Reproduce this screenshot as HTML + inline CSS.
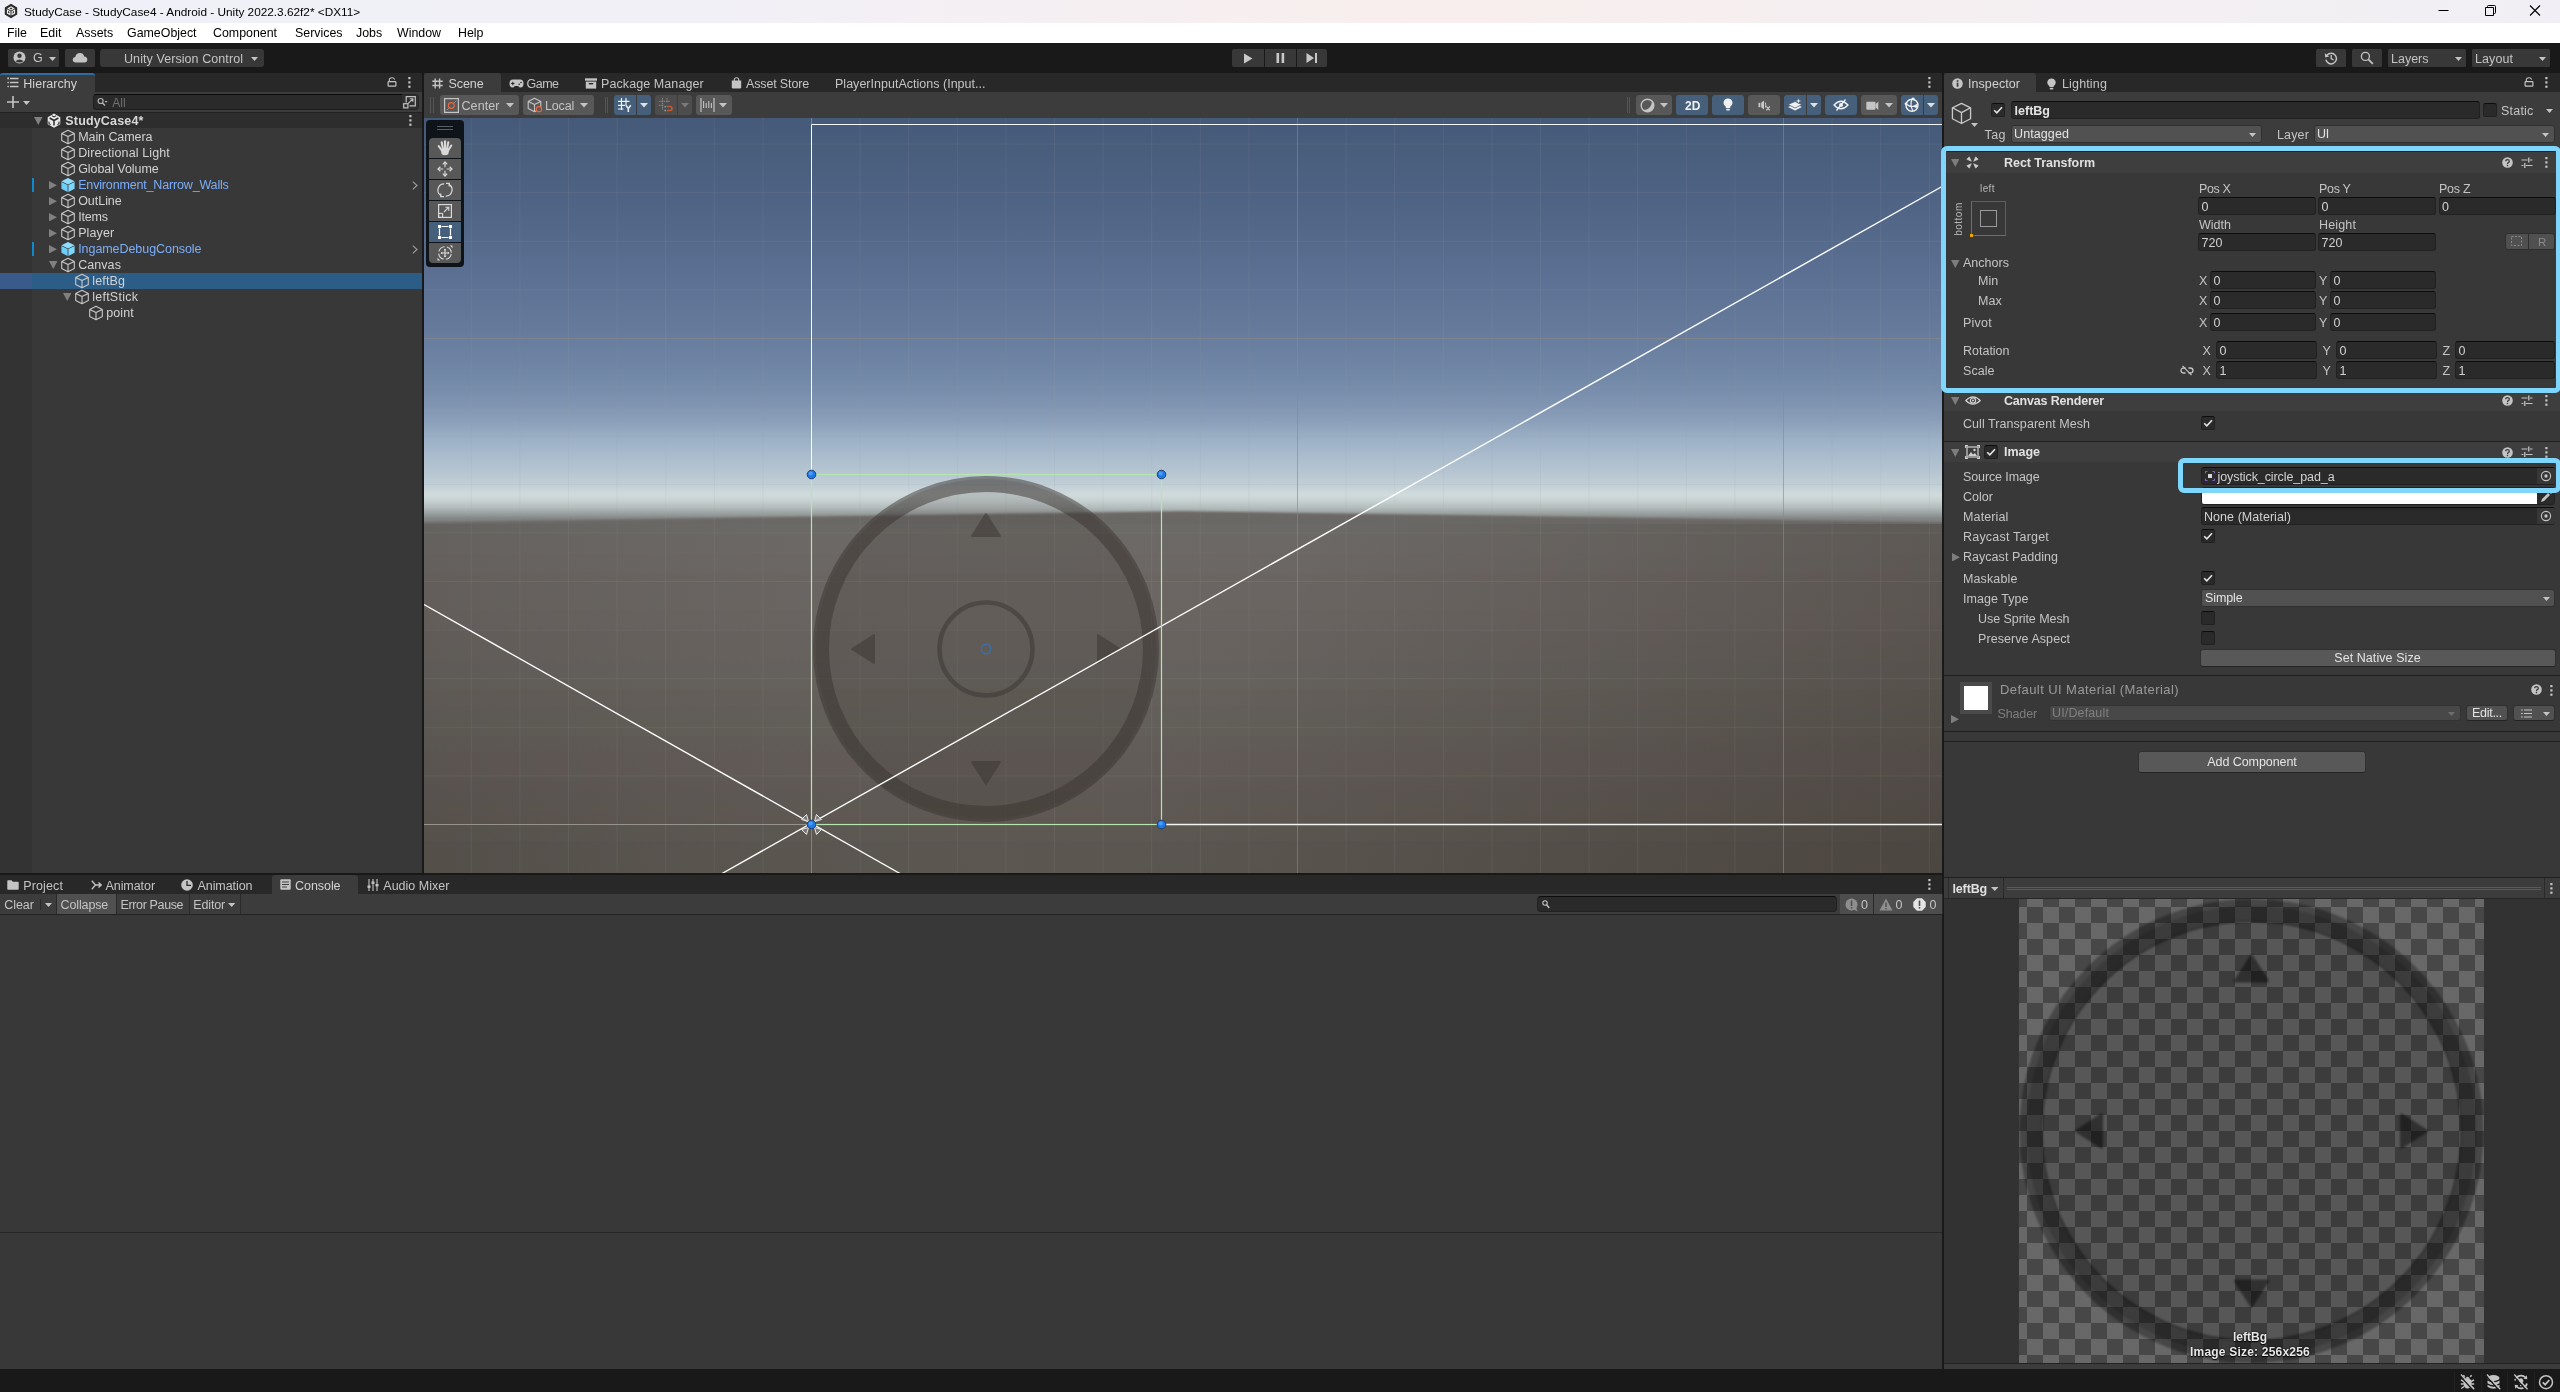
<!DOCTYPE html>
<html><head><meta charset="utf-8"><title>Unity</title>
<style>
*{box-sizing:border-box}
html,body{margin:0;padding:0}
body{width:2560px;height:1392px;position:relative;overflow:hidden;background:#383838;font-family:"Liberation Sans",sans-serif;font-size:12.5px;color:#c4c4c4}
.a{position:absolute}
.t{white-space:nowrap;line-height:16px;height:16px}
.f{background:#2a2a2a;border:1px solid #212121;border-top-color:#0d0d0d;border-radius:3px;color:#d2d2d2}
.dd{background:#515151;border:1px solid #303030;border-top-color:#303030;border-radius:3px}
.btn{background:#585858;border:1px solid #303030;border-bottom-color:#242424;border-radius:3px}
.cb{width:14px;height:14px;background:#2a2a2a;border:1px solid #212121;border-top-color:#0d0d0d;border-radius:2.500px}
.tb{background:#383838;border-radius:1.500px}
.sb{background:#585858;border-radius:3px}
.sbb{background:#46607c;border-radius:3px}
.hl{border:5px solid #7fd6fd;border-radius:6px}
</style>
</head><body>
<div id="root" style="position:absolute;left:0;top:0;width:2560px;height:1392px;will-change:transform">
<div class="a " style="left:0px;top:0px;width:2560px;height:23px;background:linear-gradient(90deg,#eff0f8 0%,#f2f0f6 30%,#f8eeed 55%,#f4eff2 80%,#f1eff5 100%);"></div>
<svg class="a" style="left:3px;top:3px;" width="16" height="16" viewBox="0 0 16 16"><path d="M8 0.8 14.2 4.4V11.6L8 15.2 1.8 11.6V4.4Z" fill="#2b2b2b"/><path d="M8 3.2 11.8 5.4 8 7.6 4.2 5.4Z M3.9 6.2 7.5 8.3V12.6L3.9 10.5Z M12.1 6.2 8.5 8.3V12.6L12.1 10.5Z" fill="#f0f0f0"/><path d="M8 4.6 9.5 5.5 8 6.4 6.5 5.5Z M5 8 6.4 8.8V10.5L5 9.7Z M11 8 9.6 8.8V10.5L11 9.7Z" fill="#2b2b2b"/></svg>
<div class="a t " style="top:3.5px;left:24px;color:#000;font-size:11.8px;">StudyCase - StudyCase4 - Android - Unity 2022.3.62f2* &lt;DX11&gt;</div>
<svg class="a" style="left:2438px;top:4px;" width="110" height="16" viewBox="0 0 110 16"><path d="M0.5 6.5H10.5" stroke="#000" stroke-width="1"/><path d="M47.5 3.5H55.5V11.5H47.5Z M49.5 3.5V2.5Q49.5 1.5 50.5 1.5H56.5Q57.5 1.5 57.5 2.5V8.5Q57.5 9.5 56.5 9.5H55.5" fill="none" stroke="#000" stroke-width="1"/><path d="M92 1.5 102 11.5M102 1.5 92 11.5" stroke="#000" stroke-width="1.1"/></svg>
<div class="a " style="left:0px;top:23px;width:2560px;height:20px;background:#ffffff;"></div>
<div class="a t m" style="top:24.5px;left:7px;color:#000;font-size:12.4px;">File</div>
<div class="a t m" style="top:24.5px;left:40px;color:#000;font-size:12.4px;">Edit</div>
<div class="a t m" style="top:24.5px;left:76px;color:#000;font-size:12.4px;">Assets</div>
<div class="a t m" style="top:24.5px;left:127px;color:#000;font-size:12.4px;">GameObject</div>
<div class="a t m" style="top:24.5px;left:213px;color:#000;font-size:12.4px;">Component</div>
<div class="a t m" style="top:24.5px;left:295px;color:#000;font-size:12.4px;">Services</div>
<div class="a t m" style="top:24.5px;left:356px;color:#000;font-size:12.4px;">Jobs</div>
<div class="a t m" style="top:24.5px;left:397px;color:#000;font-size:12.4px;">Window</div>
<div class="a t m" style="top:24.5px;left:458px;color:#000;font-size:12.4px;">Help</div>
<div class="a " style="left:0px;top:43px;width:2560px;height:30px;background:#191919;"></div>
<div class="a tb" style="left:8px;top:49px;width:51px;height:18px;"></div>
<svg class="a" style="left:13px;top:51px;" width="13" height="13" viewBox="0 0 13 13"><circle cx="6.5" cy="6.5" r="6" fill="#c4c4c4"/><circle cx="6.5" cy="4.8" r="2.2" fill="#383838"/><path d="M2.4 10.2Q6.5 6.6 10.6 10.2Q6.5 13 2.4 10.2Z" fill="#383838"/></svg>
<div class="a t " style="top:50px;left:33px;color:#c4c4c4;">G</div>
<svg class="a" style="left:49px;top:56.5px;" width="7" height="4" viewBox="0 0 7 4"><path d="M0 0H7L3.5 4Z" fill="#c4c4c4"/></svg>
<div class="a tb" style="left:65px;top:49px;width:30px;height:18px;"></div>
<svg class="a" style="left:72px;top:52px;" width="16" height="11" viewBox="0 0 16 11"><path d="M4 10.5Q0.7 10.5 0.7 7.6Q0.7 5.2 3.3 4.9Q4 1 8 1Q11.4 1 12.2 4.4Q15.3 4.6 15.3 7.6Q15.3 10.5 12.5 10.5Z" fill="#c4c4c4"/></svg>
<div class="a tb" style="left:100px;top:49px;width:164px;height:18px;border-radius:3px"></div>
<div class="a t " style="top:50.5px;left:124px;color:#c4c4c4;letter-spacing:0.076px;">Unity Version Control</div>
<svg class="a" style="left:251px;top:56.5px;" width="7" height="4" viewBox="0 0 7 4"><path d="M0 0H7L3.5 4Z" fill="#c4c4c4"/></svg>
<div class="a " style="left:1232px;top:49px;width:32px;height:18px;background:#383838;border-radius:2px 0 0 2px"></div>
<div class="a " style="left:1265px;top:49px;width:31px;height:18px;background:#383838;"></div>
<div class="a " style="left:1297px;top:49px;width:30px;height:18px;background:#383838;border-radius:0 2px 2px 0"></div>
<svg class="a" style="left:1243px;top:52.5px;" width="10" height="11" viewBox="0 0 10 11"><path d="M1 0.5 9.5 5.5 1 10.5Z" fill="#c8c8c8"/></svg>
<svg class="a" style="left:1276px;top:53px;" width="9" height="10" viewBox="0 0 9 10"><rect x="0.5" y="0" width="2.6" height="10" fill="#c8c8c8"/><rect x="5.6" y="0" width="2.6" height="10" fill="#c8c8c8"/></svg>
<svg class="a" style="left:1306px;top:53px;" width="12" height="10" viewBox="0 0 12 10"><path d="M0.5 0 8 5 0.5 10Z" fill="#c8c8c8"/><rect x="9" y="0" width="2" height="10" fill="#c8c8c8"/></svg>
<div class="a tb" style="left:2316px;top:49px;width:30px;height:18px;"></div>
<svg class="a" style="left:2324px;top:51px;" width="14" height="14" viewBox="0 0 14 14"><path d="M3 4.2A5.3 5.3 0 1 1 1.9 8.6" fill="none" stroke="#c4c4c4" stroke-width="1.5"/><path d="M0.8 2.2 1.2 6.4 5.2 5.4Z" fill="#c4c4c4"/><path d="M7.2 4V7.6L9.6 9" fill="none" stroke="#c4c4c4" stroke-width="1.3"/></svg>
<div class="a tb" style="left:2352px;top:49px;width:30px;height:18px;"></div>
<svg class="a" style="left:2360px;top:51px;" width="14" height="14" viewBox="0 0 14 14"><circle cx="5.4" cy="5.4" r="4" fill="none" stroke="#c4c4c4" stroke-width="1.3"/><path d="M8.4 8.4 12.8 12.8" stroke="#c4c4c4" stroke-width="1.8"/></svg>
<div class="a tb" style="left:2388px;top:49px;width:78px;height:18px;"></div>
<div class="a t " style="top:50.5px;left:2391px;color:#c4c4c4;letter-spacing:-0.003px;">Layers</div>
<svg class="a" style="left:2455px;top:56.5px;" width="7" height="4" viewBox="0 0 7 4"><path d="M0 0H7L3.5 4Z" fill="#c4c4c4"/></svg>
<div class="a tb" style="left:2472px;top:49px;width:78px;height:18px;"></div>
<div class="a t " style="top:50.5px;left:2475px;color:#c4c4c4;letter-spacing:0.079px;">Layout</div>
<svg class="a" style="left:2539px;top:56.5px;" width="7" height="4" viewBox="0 0 7 4"><path d="M0 0H7L3.5 4Z" fill="#c4c4c4"/></svg>
<div class="a " style="left:0px;top:73px;width:2560px;height:1296px;background:#191919;"></div>
<div class="a " style="left:0px;top:73px;width:422px;height:800px;background:#383838;"></div>
<div class="a " style="left:0px;top:73px;width:422px;height:19px;background:#282828;"></div>
<div class="a " style="left:0px;top:73px;width:95px;height:19px;background:#3c3c3c;border-top:2px solid #2f6ca6;border-radius:3px 3px 0 0"></div>
<svg class="a" style="left:7px;top:77px;" width="12" height="11" viewBox="0 0 12 11"><path d="M3 1.5H11.5M3 5.5H11.5M3 9.5H11.5" stroke="#c4c4c4" stroke-width="1.3"/><path d="M0.3 0.6H2V2.3H0.3Z" fill="#c4c4c4"/><path d="M1.2 4.7V6.3M0.4 5.5H2M1.2 8.7V10.3M.4 9.5H2" stroke="#c4c4c4" stroke-width=".8"/></svg>
<div class="a t " style="top:75.5px;left:23.3px;color:#d2d2d2;letter-spacing:0.03px;">Hierarchy</div>
<svg class="a" style="left:387px;top:77px;" width="10" height="10" viewBox="0 0 10 10"><path d="M2.3 4.6V3Q2.3 0.8 5 0.8Q7.2 0.8 7.6 2.6" fill="none" stroke="#c4c4c4" stroke-width="1.1"/><rect x="1.1" y="4.6" width="7.8" height="4.6" rx="0.8" fill="none" stroke="#c4c4c4" stroke-width="1.2"/></svg>
<svg class="a" style="left:407.8px;top:77px;" width="3" height="11" viewBox="0 0 3 11"><rect x="0.3" y="0" width="2.2" height="2.2" fill="#c4c4c4"/><rect x="0.3" y="4.3" width="2.2" height="2.2" fill="#c4c4c4"/><rect x="0.3" y="8.6" width="2.2" height="2.2" fill="#c4c4c4"/></svg>
<div class="a " style="left:0px;top:92px;width:422px;height:21px;background:#3c3c3c;border-bottom:1px solid #232323"></div>
<svg class="a" style="left:7px;top:96px;" width="12" height="12" viewBox="0 0 12 12"><path d="M6 0V12M0 6H12" stroke="#c4c4c4" stroke-width="1.6"/></svg>
<svg class="a" style="left:23.3px;top:100.5px;" width="7" height="4" viewBox="0 0 7 4"><path d="M0 0H7L3.5 4Z" fill="#c4c4c4"/></svg>
<div class="a f" style="left:93px;top:94px;width:308.5px;height:16px;border-radius:3.500px 0 0 3.500px;border-color:#1f1f1f;border-top-color:#0a0a0a;border-right:none"></div>
<div class="a " style="left:401.5px;top:94px;width:17px;height:16px;background:#303030;border-radius:0 4px 4px 0;border:1px solid #262626;border-left:none"></div>
<svg class="a" style="left:97px;top:97px;" width="12" height="11" viewBox="0 0 12 11"><circle cx="3.6" cy="4" r="2.5" fill="none" stroke="#b4b4b4" stroke-width="1.2"/><path d="M5.3 5.8 8 8.6" stroke="#b4b4b4" stroke-width="1.4"/><path d="M7.5 4H10.7L9.1 5.8Z" fill="#b4b4b4"/></svg>
<div class="a t " style="top:94.5px;left:112.3px;color:#707070;font-size:12px;">All</div>
<svg class="a" style="left:402.7px;top:95.5px;" width="14" height="13" viewBox="0 0 14 13"><path d="M3.200 6.500V0.700H12.300V9.800H6.500" fill="none" stroke="#c0c0c0" stroke-width="1.200"/><rect x="0.700" y="7.700" width="4.200" height="4.200" fill="none" stroke="#c0c0c0" stroke-width="1.200"/><path d="M5 7.600 9.800 2.800M6.800 2.700H9.900V5.800" fill="none" stroke="#c0c0c0" stroke-width="1.100"/></svg>
<div class="a " style="left:0px;top:113px;width:32px;height:760px;background:#333333;"></div>
<div class="a " style="left:0px;top:113px;width:422px;height:15px;background:#2d2d2d;"></div>
<svg class="a" style="left:34.3px;top:116.5px;" width="8.5" height="8" viewBox="0 0 8.5 8"><path d="M0 0H8.5L4.25 8Z" fill="#808080"/></svg>
<svg class="a" style="left:47px;top:113px;" width="14" height="15" viewBox="0 0 14 15"><path d="M7 0.6 13.3 4.2V11.2L7 14.8 0.7 11.2V4.2Z" fill="#e8e8e8"/><path d="M7 3.6 8.2 4.3V6.2L10.6 7.6 11.8 6.9V4.9L7 2.1 2.2 4.9V6.9L3.4 7.6 5.8 6.2V4.3Z" fill="#2d2d2d" opacity="0"/><path d="M7 7.5 2.6 5 M7 7.5 11.4 5M7 7.5V12.6" stroke="#2d2d2d" stroke-width="1.5" fill="none"/><path d="M4.8 2.6 7 3.9 9.2 2.6M2 8.6V10.6L3.6 11.6M12 8.6V10.6L10.4 11.6" stroke="#2d2d2d" stroke-width="1.1" fill="none"/></svg>
<div class="a t " style="top:112.5px;left:65.3px;color:#d8d8d8;font-weight:bold;letter-spacing:0.167px;">StudyCase4*</div>
<svg class="a" style="left:408.5px;top:115px;" width="3" height="11" viewBox="0 0 3 11"><rect x="0.3" y="0" width="2.2" height="2.2" fill="#c4c4c4"/><rect x="0.3" y="4.3" width="2.2" height="2.2" fill="#c4c4c4"/><rect x="0.3" y="8.6" width="2.2" height="2.2" fill="#c4c4c4"/></svg>
<svg class="a" style="left:60px;top:129px;" width="16" height="16" viewBox="0 0 16 16"><path d="M8 1.3 14.3 4.4V11.6L8 14.7 1.7 11.6V4.4Z M1.7 4.4 8 7.6 14.3 4.4 M8 7.6V14.7" fill="none" stroke="#c8c8c8" stroke-width="1.1" stroke-linejoin="round"/></svg>
<div class="a t " style="top:129px;left:78.2px;color:#d2d2d2;letter-spacing:-0.07px;">Main Camera</div>
<svg class="a" style="left:60px;top:145px;" width="16" height="16" viewBox="0 0 16 16"><path d="M8 1.3 14.3 4.4V11.6L8 14.7 1.7 11.6V4.4Z M1.7 4.4 8 7.6 14.3 4.4 M8 7.6V14.7" fill="none" stroke="#c8c8c8" stroke-width="1.1" stroke-linejoin="round"/></svg>
<div class="a t " style="top:145px;left:78.2px;color:#d2d2d2;letter-spacing:0.125px;">Directional Light</div>
<svg class="a" style="left:60px;top:161px;" width="16" height="16" viewBox="0 0 16 16"><path d="M8 1.3 14.3 4.4V11.6L8 14.7 1.7 11.6V4.4Z M1.7 4.4 8 7.6 14.3 4.4 M8 7.6V14.7" fill="none" stroke="#c8c8c8" stroke-width="1.1" stroke-linejoin="round"/></svg>
<div class="a t " style="top:161px;left:78.2px;color:#d2d2d2;letter-spacing:-0.061px;">Global Volume</div>
<div class="a " style="left:32px;top:178px;width:2.3px;height:14px;background:#0f88d0;"></div>
<svg class="a" style="left:60px;top:177px;" width="16" height="16" viewBox="0 0 16 16"><path d="M8 1 14.6 4.3 8 7.6 1.4 4.3Z" fill="#8fdcff"/><path d="M1.4 4.9 7.6 8V15L1.4 11.8Z" fill="#6fcdf7"/><path d="M14.6 4.9 8.4 8V15l6.2-3.2Z" fill="#7fd6fd"/></svg>
<svg class="a" style="left:412px;top:180.5px;" width="6" height="9" viewBox="0 0 6 9"><path d="M0.8 0.6 5 4.5 0.8 8.4" fill="none" stroke="#9a9a9a" stroke-width="1.2"/></svg>
<svg class="a" style="left:49px;top:180.5px;" width="8" height="8.5" viewBox="0 0 8 8.5"><path d="M0 0V8.5L8 4.25Z" fill="#808080"/></svg>
<div class="a t " style="top:177px;left:78.2px;color:#7baefa;letter-spacing:-0.164px;">Environment_Narrow_Walls</div>
<svg class="a" style="left:60px;top:193px;" width="16" height="16" viewBox="0 0 16 16"><path d="M8 1.3 14.3 4.4V11.6L8 14.7 1.7 11.6V4.4Z M1.7 4.4 8 7.6 14.3 4.4 M8 7.6V14.7" fill="none" stroke="#c8c8c8" stroke-width="1.1" stroke-linejoin="round"/></svg>
<svg class="a" style="left:49px;top:196.5px;" width="8" height="8.5" viewBox="0 0 8 8.5"><path d="M0 0V8.5L8 4.25Z" fill="#808080"/></svg>
<div class="a t " style="top:193px;left:78.2px;color:#d2d2d2;letter-spacing:-0.04px;">OutLine</div>
<svg class="a" style="left:60px;top:209px;" width="16" height="16" viewBox="0 0 16 16"><path d="M8 1.3 14.3 4.4V11.6L8 14.7 1.7 11.6V4.4Z M1.7 4.4 8 7.6 14.3 4.4 M8 7.6V14.7" fill="none" stroke="#c8c8c8" stroke-width="1.1" stroke-linejoin="round"/></svg>
<svg class="a" style="left:49px;top:212.5px;" width="8" height="8.5" viewBox="0 0 8 8.5"><path d="M0 0V8.5L8 4.25Z" fill="#808080"/></svg>
<div class="a t " style="top:209px;left:78.2px;color:#d2d2d2;letter-spacing:-0.162px;">Items</div>
<svg class="a" style="left:60px;top:225px;" width="16" height="16" viewBox="0 0 16 16"><path d="M8 1.3 14.3 4.4V11.6L8 14.7 1.7 11.6V4.4Z M1.7 4.4 8 7.6 14.3 4.4 M8 7.6V14.7" fill="none" stroke="#c8c8c8" stroke-width="1.1" stroke-linejoin="round"/></svg>
<svg class="a" style="left:49px;top:228.5px;" width="8" height="8.5" viewBox="0 0 8 8.5"><path d="M0 0V8.5L8 4.25Z" fill="#808080"/></svg>
<div class="a t " style="top:225px;left:78.2px;color:#d2d2d2;letter-spacing:0.095px;">Player</div>
<div class="a " style="left:32px;top:242px;width:2.3px;height:14px;background:#0f88d0;"></div>
<svg class="a" style="left:60px;top:241px;" width="16" height="16" viewBox="0 0 16 16"><path d="M8 1 14.6 4.3 8 7.6 1.4 4.3Z" fill="#8fdcff"/><path d="M1.4 4.9 7.6 8V15L1.4 11.8Z" fill="#6fcdf7"/><path d="M14.6 4.9 8.4 8V15l6.2-3.2Z" fill="#7fd6fd"/></svg>
<svg class="a" style="left:412px;top:244.5px;" width="6" height="9" viewBox="0 0 6 9"><path d="M0.8 0.6 5 4.5 0.8 8.4" fill="none" stroke="#9a9a9a" stroke-width="1.2"/></svg>
<svg class="a" style="left:49px;top:244.5px;" width="8" height="8.5" viewBox="0 0 8 8.5"><path d="M0 0V8.5L8 4.25Z" fill="#808080"/></svg>
<div class="a t " style="top:241px;left:78.2px;color:#7baefa;letter-spacing:-0.063px;">IngameDebugConsole</div>
<svg class="a" style="left:60px;top:257px;" width="16" height="16" viewBox="0 0 16 16"><path d="M8 1.3 14.3 4.4V11.6L8 14.7 1.7 11.6V4.4Z M1.7 4.4 8 7.6 14.3 4.4 M8 7.6V14.7" fill="none" stroke="#c8c8c8" stroke-width="1.1" stroke-linejoin="round"/></svg>
<svg class="a" style="left:48.5px;top:261px;" width="8.5" height="8" viewBox="0 0 8.5 8"><path d="M0 0H8.5L4.25 8Z" fill="#808080"/></svg>
<div class="a t " style="top:257px;left:78.2px;color:#d2d2d2;letter-spacing:0.062px;">Canvas</div>
<div class="a " style="left:0px;top:273px;width:422px;height:16px;background:#2c5d87;"></div>
<div class="a " style="left:0px;top:273px;width:32px;height:16px;background:#3a5a8c;"></div>
<svg class="a" style="left:74px;top:273px;" width="16" height="16" viewBox="0 0 16 16"><path d="M8 1.3 14.3 4.4V11.6L8 14.7 1.7 11.6V4.4Z M1.7 4.4 8 7.6 14.3 4.4 M8 7.6V14.7" fill="none" stroke="#c8c8c8" stroke-width="1.1" stroke-linejoin="round"/></svg>
<div class="a t " style="top:273px;left:92.2px;color:#d2d2d2;letter-spacing:0.173px;">leftBg</div>
<svg class="a" style="left:74px;top:289px;" width="16" height="16" viewBox="0 0 16 16"><path d="M8 1.3 14.3 4.4V11.6L8 14.7 1.7 11.6V4.4Z M1.7 4.4 8 7.6 14.3 4.4 M8 7.6V14.7" fill="none" stroke="#c8c8c8" stroke-width="1.1" stroke-linejoin="round"/></svg>
<svg class="a" style="left:62.5px;top:293px;" width="8.5" height="8" viewBox="0 0 8.5 8"><path d="M0 0H8.5L4.25 8Z" fill="#808080"/></svg>
<div class="a t " style="top:289px;left:92.2px;color:#d2d2d2;letter-spacing:0.249px;">leftStick</div>
<svg class="a" style="left:88px;top:305px;" width="16" height="16" viewBox="0 0 16 16"><path d="M8 1.3 14.3 4.4V11.6L8 14.7 1.7 11.6V4.4Z M1.7 4.4 8 7.6 14.3 4.4 M8 7.6V14.7" fill="none" stroke="#c8c8c8" stroke-width="1.1" stroke-linejoin="round"/></svg>
<div class="a t " style="top:305px;left:106.2px;color:#d2d2d2;letter-spacing:0.129px;">point</div>
<div class="a " style="left:424px;top:73px;width:1518px;height:800px;background:#383838;"></div>
<div class="a " style="left:424px;top:73px;width:1518px;height:19px;background:#282828;"></div>
<div class="a " style="left:424px;top:73px;width:77px;height:19px;background:#3c3c3c;border-radius:3px 3px 0 0"></div>
<svg class="a" style="left:432px;top:78px;" width="11" height="11" viewBox="0 0 11 11"><path d="M3.2 0.5V10.5M7.6 0.5V10.5M0.3 3.3H10.7M0.3 7.5H10.7" stroke="#c4c4c4" stroke-width="1.4"/></svg>
<div class="a t " style="top:75.5px;left:448.5px;color:#d2d2d2;letter-spacing:-0.088px;">Scene</div>
<svg class="a" style="left:508.5px;top:79px;" width="15" height="9" viewBox="0 0 15 9"><path d="M4 0.5H11Q14.5 0.5 14.5 4.5Q14.5 8.5 11.5 8.5Q10 8.5 9.3 7H5.7Q5 8.5 3.5 8.5Q0.5 8.500.5 4.5Q0.5 0.5 4 0.5Z" fill="#c4c4c4"/><path d="M3.8 2.8V6.2M2.1 4.500H5.5" stroke="#282828" stroke-width="1.1"/><circle cx="10.2" cy="5.300" r=".8" fill="#282828"/><circle cx="12" cy="3.500" r=".8" fill="#282828"/></svg>
<div class="a t " style="top:75.5px;left:526.5px;color:#c4c4c4;letter-spacing:-0.509px;">Game</div>
<svg class="a" style="left:585px;top:78px;" width="12" height="11" viewBox="0 0 12 11"><rect x="0" y="0.300" width="12" height="2.400" fill="#c4c4c4"/><path d="M0.800 3.600H11.200V10.600H0.800Z" fill="#c4c4c4"/><rect x="3.800" y="5" width="4.400" height="1.400" fill="#282828"/></svg>
<div class="a t " style="top:75.5px;left:601px;color:#c4c4c4;letter-spacing:0.087px;">Package Manager</div>
<svg class="a" style="left:730.5px;top:77px;" width="11" height="12" viewBox="0 0 11 12"><path d="M3.300 4V2.800Q3.300 0.800 5.500 0.800Q7.700 0.800 7.700 2.800V4" fill="none" stroke="#c4c4c4" stroke-width="1.1"/><path d="M0.800 3.500H10.200V10.300Q10.200 11.500 9 11.500H2Q0.800 11.500 0.800 10.300Z" fill="#c4c4c4"/></svg>
<div class="a t " style="top:75.5px;left:746px;color:#c4c4c4;letter-spacing:-0.146px;">Asset Store</div>
<div class="a t " style="top:75.5px;left:835px;color:#c4c4c4;letter-spacing:0.015px;">PlayerInputActions (Input...</div>
<svg class="a" style="left:1927.5px;top:77px;" width="3" height="11" viewBox="0 0 3 11"><rect x="0.3" y="0" width="2.2" height="2.2" fill="#c4c4c4"/><rect x="0.3" y="4.3" width="2.2" height="2.2" fill="#c4c4c4"/><rect x="0.3" y="8.6" width="2.2" height="2.2" fill="#c4c4c4"/></svg>
<div class="a " style="left:424px;top:92px;width:1518px;height:26px;background:#3c3c3c;"></div>
<div class="a " style="left:430px;top:97px;width:1px;height:16px;background:#555;"></div><div class="a " style="left:432.8px;top:97px;width:1px;height:16px;background:#555;"></div>
<div class="a " style="left:604.5px;top:97px;width:1px;height:16px;background:#555;"></div><div class="a " style="left:607.3px;top:97px;width:1px;height:16px;background:#555;"></div>
<div class="a " style="left:1626.5px;top:97px;width:1px;height:16px;background:#555;"></div><div class="a " style="left:1629.3px;top:97px;width:1px;height:16px;background:#555;"></div>
<div class="a sb" style="left:440px;top:95px;width:79px;height:20px;"></div>
<svg class="a" style="left:443.5px;top:97.5px;" width="15" height="15" viewBox="0 0 15 15"><rect x="0.600" y="0.600" width="13.800" height="13.800" fill="none" stroke="#c4c4c4" stroke-width="1.2"/><path d="M2.500 12.500 12.500 2.500" stroke="#c4c4c4" stroke-width=".8" opacity=".6"/><circle cx="7.300" cy="7.500" r="2.900" fill="#595959" stroke="#f0643c" stroke-width="1.100"/></svg>
<div class="a t " style="top:97.5px;left:461.5px;color:#c4c4c4;letter-spacing:0.081px;">Center</div>
<svg class="a" style="left:505.5px;top:103px;" width="8" height="4.5" viewBox="0 0 8 4.5"><path d="M0 0H8L4.0 4.5Z" fill="#c4c4c4"/></svg>
<div class="a sb" style="left:523px;top:95px;width:71px;height:20px;"></div>
<svg class="a" style="left:526.5px;top:97px;" width="16" height="16" viewBox="0 0 16 16"><path d="M7.500 1.300 13.800 4.400V11.600L7.500 14.700 1.200 11.600V4.400Z M1.200 4.400 7.500 7.600 13.800 4.400 M7.500 7.600V14.700" fill="none" stroke="#c4c4c4" stroke-width="1.100" stroke-linejoin="round"/><circle cx="12" cy="12.200" r="2.600" fill="#595959" stroke="#f0643c" stroke-width="1.100"/></svg>
<div class="a t " style="top:97.5px;left:545px;color:#c4c4c4;letter-spacing:-0.176px;">Local</div>
<svg class="a" style="left:580px;top:103px;" width="8" height="4.5" viewBox="0 0 8 4.5"><path d="M0 0H8L4.0 4.5Z" fill="#c4c4c4"/></svg>
<div class="a " style="left:614px;top:95px;width:22px;height:20px;background:#46607c;border-radius:3px 0 0 3px"></div>
<div class="a " style="left:637px;top:95px;width:14px;height:20px;background:#46607c;border-radius:0 3px 3px 0"></div>
<svg class="a" style="left:617px;top:97px;" width="17" height="16" viewBox="0 0 17 16"><path d="M4.500 1V13M9 1V8M1 4.300H12.500M1 8.300H8M1 12H6.500" stroke="#f0f0f0" stroke-width="1.200" fill="none"/><path d="M8.800 8.300 11.300 11.500 13.800 8.300M11.300 11.500V15" stroke="#f0f0f0" stroke-width="1.500" fill="none"/></svg>
<svg class="a" style="left:640px;top:103px;" width="8" height="4.5" viewBox="0 0 8 4.5"><path d="M0 0H8L4.0 4.5Z" fill="#e0e0e0"/></svg>
<div class="a " style="left:655px;top:95px;width:22px;height:20px;background:#4d4d4d;border-radius:3px 0 0 3px"></div>
<div class="a " style="left:678px;top:95px;width:14px;height:20px;background:#4d4d4d;border-radius:0 3px 3px 0"></div>
<svg class="a" style="left:658px;top:97px;" width="17" height="16" viewBox="0 0 17 16"><path d="M4.500 1V13M9 1V6M1 4.300H12.500M1 8.300H6" stroke="#8a8a8a" stroke-width="1" fill="none" stroke-dasharray="1.500 .8"/><path d="M9 9.500H12Q14 9.500 14 11.500Q14 13.500 12 13.500H9" stroke="#c8562e" stroke-width="1.600" fill="none"/><rect x="6.500" y="8.800" width="1.600" height="1.600" fill="#9a9a9a"/><rect x="6.500" y="12.700" width="1.600" height="1.600" fill="#9a9a9a"/></svg>
<svg class="a" style="left:681px;top:103px;" width="8" height="4.5" viewBox="0 0 8 4.5"><path d="M0 0H8L4.0 4.5Z" fill="#7a7a7a"/></svg>
<div class="a sb" style="left:696px;top:95px;width:36px;height:20px;"></div>
<svg class="a" style="left:700px;top:98px;" width="15" height="14" viewBox="0 0 15 14"><path d="M1 0V14M14 0V14" stroke="#c4c4c4" stroke-width="1.200"/><path d="M3.600 3V10M6.200 5V10M8.800 3V10M11.400 5V10" stroke="#c4c4c4" stroke-width="1.100"/></svg>
<svg class="a" style="left:719px;top:103px;" width="8" height="4.5" viewBox="0 0 8 4.5"><path d="M0 0H8L4.0 4.5Z" fill="#c4c4c4"/></svg>
<div class="a sb" style="left:1636px;top:95px;width:36px;height:20px;"></div>
<svg class="a" style="left:1639.5px;top:97.5px;" width="15" height="15" viewBox="0 0 15 15"><circle cx="7.500" cy="7.500" r="6.300" fill="none" stroke="#c4c4c4" stroke-width="1.400"/><path d="M11.550 2.670A6.300 6.300 0 1 1 2.670 11.550A7.500 7.500 0 0 0 11.550 2.670Z" fill="#c4c4c4"/></svg>
<svg class="a" style="left:1660px;top:103px;" width="8" height="4.5" viewBox="0 0 8 4.5"><path d="M0 0H8L4.0 4.5Z" fill="#c4c4c4"/></svg>
<div class="a sbb" style="left:1676px;top:95px;width:32px;height:20px;"></div>
<div class="a t " style="top:97.5px;left:1685px;color:#f0f0f0;font-weight:bold;font-size:12px;">2D</div>
<div class="a sbb" style="left:1712px;top:95px;width:32px;height:20px;"></div>
<svg class="a" style="left:1722px;top:98px;" width="12" height="14" viewBox="0 0 12 14"><path d="M6 0.500A4.300 4.300 0 0 1 8.300 8.500V10H3.700V8.500A4.300 4.300 0 0 1 6 0.500Z" fill="#f0f0f0"/><rect x="4.200" y="10.800" width="3.600" height="1.800" rx=".8" fill="#f0f0f0"/></svg>
<div class="a sb" style="left:1748px;top:95px;width:32px;height:20px;"></div>
<svg class="a" style="left:1758px;top:100px;" width="13" height="11" viewBox="0 0 13 11"><path d="M0.500 2.800H2.300V7.200H0.500Z" fill="#c8c8c8"/><path d="M3.200 2.800 6 0.500V9.500L3.200 7.200Z" fill="#c8c8c8"/><path d="M7.300 2.500Q8.300 5 7.300 7.500" stroke="#c8c8c8" stroke-width="1" fill="none"/><path d="M8.300 6.300 11.800 10.300M11.800 6.300 8.300 10.300" stroke="#c8c8c8" stroke-width="1.200"/></svg>
<div class="a " style="left:1784px;top:95px;width:22px;height:20px;background:#46607c;border-radius:3px 0 0 3px"></div>
<div class="a " style="left:1807px;top:95px;width:14px;height:20px;background:#46607c;border-radius:0 3px 3px 0"></div>
<svg class="a" style="left:1787px;top:98px;" width="16" height="14" viewBox="0 0 16 14"><path d="M1 9 8 6 15 9 8 12.500Z" fill="#f0f0f0"/><path d="M1 6.500 8 3.500 15 6.500 8 10Z" fill="#f0f0f0" stroke="#46607c" stroke-width=".8"/><path d="M11.500 0 12.300 2.200 14.500 3 12.300 3.800 11.500 6 10.700 3.800 8.500 3 10.700 2.200Z" fill="#f0f0f0" stroke="#46607c" stroke-width=".5"/></svg>
<svg class="a" style="left:1810px;top:103px;" width="8" height="4.5" viewBox="0 0 8 4.5"><path d="M0 0H8L4.0 4.5Z" fill="#e0e0e0"/></svg>
<div class="a sbb" style="left:1825px;top:95px;width:32px;height:20px;"></div>
<svg class="a" style="left:1833px;top:99px;" width="16" height="12" viewBox="0 0 16 12"><path d="M1 6Q8 -1.500 15 6Q8 13.500 1 6Z" fill="none" stroke="#f0f0f0" stroke-width="1.300"/><circle cx="8" cy="6" r="2" fill="#f0f0f0"/><path d="M12.500 0.500 3.500 11.500" stroke="#f0f0f0" stroke-width="1.300"/></svg>
<div class="a sb" style="left:1861px;top:95px;width:36px;height:20px;"></div>
<svg class="a" style="left:1865.5px;top:100.5px;" width="14" height="10" viewBox="0 0 14 10"><rect x="0.300" y="0.800" width="9.200" height="8" rx="1" fill="#c4c4c4"/><path d="M9.500 3.300 12.300 0.500V9.100L9.500 6.300Z" fill="#c4c4c4"/></svg>
<svg class="a" style="left:1885px;top:103px;" width="8" height="4.5" viewBox="0 0 8 4.5"><path d="M0 0H8L4.0 4.5Z" fill="#c4c4c4"/></svg>
<div class="a " style="left:1901px;top:95px;width:22px;height:20px;background:#46607c;border-radius:3px 0 0 3px"></div>
<div class="a " style="left:1924px;top:95px;width:14px;height:20px;background:#46607c;border-radius:0 3px 3px 0"></div>
<svg class="a" style="left:1904px;top:97px;" width="16" height="16" viewBox="0 0 16 16"><circle cx="8" cy="8.300" r="6" fill="none" stroke="#f0f0f0" stroke-width="1.400"/><path d="M2.200 7Q8 12 13.800 7M8 2.300Q5.500 8 9 14" fill="none" stroke="#f0f0f0" stroke-width="1.200"/><circle cx="9.200" cy="1.800" r="1.400" fill="#f0f0f0"/><circle cx="2" cy="6.800" r="1.400" fill="#f0f0f0"/><circle cx="11.800" cy="9.300" r="1.500" fill="#f0f0f0"/></svg>
<svg class="a" style="left:1927px;top:103px;" width="8" height="4.5" viewBox="0 0 8 4.5"><path d="M0 0H8L4.0 4.5Z" fill="#e0e0e0"/></svg>
<svg class="a" style="left:424px;top:118px;" width="1518" height="755" viewBox="0 0 1518 755"><defs><linearGradient id="sky" x1="0" y1="0" x2="0" y2="1"><stop offset="0.0000" stop-color="#455978"/><stop offset="0.1086" stop-color="#4f6384"/><stop offset="0.2013" stop-color="#5a6f91"/><stop offset="0.2808" stop-color="#667b9c"/><stop offset="0.3470" stop-color="#7389a8"/><stop offset="0.3735" stop-color="#7d92af"/><stop offset="0.4000" stop-color="#8a9eb9"/><stop offset="0.4265" stop-color="#9db1c6"/><stop offset="0.4464" stop-color="#a9bbcd"/><stop offset="0.4662" stop-color="#b4c4d0"/><stop offset="0.4848" stop-color="#c0ced6"/><stop offset="0.4993" stop-color="#d0dbdb"/><stop offset="0.5073" stop-color="#c6d0d0"/><stop offset="0.5166" stop-color="#b1bbba"/><stop offset="0.5245" stop-color="#979d9d"/><stop offset="0.5298" stop-color="#858888"/><stop offset="0.5377" stop-color="#787a7a"/></linearGradient><linearGradient id="gnd" x1="0" y1="0" x2="0" y2="1"><stop offset="0" stop-color="#6c6866"/><stop offset="0.35" stop-color="#66615d"/><stop offset="1" stop-color="#57514c"/></linearGradient><linearGradient id="gndx" x1="0" y1="0" x2="1" y2="0"><stop offset="0" stop-color="#000" stop-opacity=".05"/><stop offset="0.4" stop-color="#fff" stop-opacity=".02"/><stop offset="1" stop-color="#000" stop-opacity=".03"/></linearGradient><linearGradient id="gndd" gradientUnits="userSpaceOnUse" x1="900" y1="394" x2="1518" y2="755"><stop offset="0" stop-color="#1a0f05" stop-opacity="0"/><stop offset="1" stop-color="#1a0f05" stop-opacity=".16"/></linearGradient><filter id="hb" x="-5%" y="-5%" width="110%" height="110%"><feGaussianBlur stdDeviation="0.9"/></filter><filter id="jb"><feGaussianBlur stdDeviation="0.7"/></filter></defs><rect x="0" y="0" width="1518" height="755" fill="url(#sky)"/><path d="M-10.0 404.6L759.0 393.2L1528.0 404.6V765H-10Z" fill="url(#gnd)" filter="url(#hb)"/><rect x="0" y="406" width="1518" height="349" fill="url(#gndx)"/><rect x="0" y="406" width="1518" height="349" fill="url(#gndd)"/><path d="M47.3 0V755" stroke="#a0a0a0" stroke-opacity="0.13" stroke-width="1"/><path d="M95.9 0V755" stroke="#a0a0a0" stroke-opacity="0.13" stroke-width="1"/><path d="M144.5 0V755" stroke="#a0a0a0" stroke-opacity="0.13" stroke-width="1"/><path d="M193.1 0V755" stroke="#a0a0a0" stroke-opacity="0.13" stroke-width="1"/><path d="M241.7 0V755" stroke="#a0a0a0" stroke-opacity="0.13" stroke-width="1"/><path d="M290.3 0V755" stroke="#a0a0a0" stroke-opacity="0.13" stroke-width="1"/><path d="M338.9 0V755" stroke="#a0a0a0" stroke-opacity="0.13" stroke-width="1"/><path d="M436.1 0V755" stroke="#a0a0a0" stroke-opacity="0.13" stroke-width="1"/><path d="M484.7 0V755" stroke="#a0a0a0" stroke-opacity="0.13" stroke-width="1"/><path d="M533.3 0V755" stroke="#a0a0a0" stroke-opacity="0.13" stroke-width="1"/><path d="M581.9 0V755" stroke="#a0a0a0" stroke-opacity="0.13" stroke-width="1"/><path d="M630.5 0V755" stroke="#a0a0a0" stroke-opacity="0.13" stroke-width="1"/><path d="M679.1 0V755" stroke="#a0a0a0" stroke-opacity="0.13" stroke-width="1"/><path d="M727.7 0V755" stroke="#a0a0a0" stroke-opacity="0.13" stroke-width="1"/><path d="M776.3 0V755" stroke="#a0a0a0" stroke-opacity="0.13" stroke-width="1"/><path d="M824.9 0V755" stroke="#a0a0a0" stroke-opacity="0.13" stroke-width="1"/><path d="M873.5 0V755" stroke="#8c8884" stroke-opacity="0.6" stroke-width="1"/><path d="M922.1 0V755" stroke="#a0a0a0" stroke-opacity="0.13" stroke-width="1"/><path d="M970.7 0V755" stroke="#a0a0a0" stroke-opacity="0.13" stroke-width="1"/><path d="M1019.3 0V755" stroke="#a0a0a0" stroke-opacity="0.13" stroke-width="1"/><path d="M1067.9 0V755" stroke="#a0a0a0" stroke-opacity="0.13" stroke-width="1"/><path d="M1116.5 0V755" stroke="#a0a0a0" stroke-opacity="0.13" stroke-width="1"/><path d="M1165.1 0V755" stroke="#a0a0a0" stroke-opacity="0.13" stroke-width="1"/><path d="M1213.7 0V755" stroke="#a0a0a0" stroke-opacity="0.13" stroke-width="1"/><path d="M1262.3 0V755" stroke="#a0a0a0" stroke-opacity="0.13" stroke-width="1"/><path d="M1310.9 0V755" stroke="#a0a0a0" stroke-opacity="0.13" stroke-width="1"/><path d="M1359.5 0V755" stroke="#8c8884" stroke-opacity="0.6" stroke-width="1"/><path d="M1408.1 0V755" stroke="#a0a0a0" stroke-opacity="0.13" stroke-width="1"/><path d="M1456.7 0V755" stroke="#a0a0a0" stroke-opacity="0.13" stroke-width="1"/><path d="M1505.3 0V755" stroke="#a0a0a0" stroke-opacity="0.13" stroke-width="1"/><path d="M0 657.9H1518" stroke="#a0a0a0" stroke-opacity="0.13" stroke-width="1"/><path d="M0 609.3H1518" stroke="#a0a0a0" stroke-opacity="0.13" stroke-width="1"/><path d="M0 560.7H1518" stroke="#a0a0a0" stroke-opacity="0.13" stroke-width="1"/><path d="M0 512.1H1518" stroke="#a0a0a0" stroke-opacity="0.13" stroke-width="1"/><path d="M0 463.5H1518" stroke="#a0a0a0" stroke-opacity="0.13" stroke-width="1"/><path d="M0 414.9H1518" stroke="#a0a0a0" stroke-opacity="0.13" stroke-width="1"/><path d="M0 366.3H1518" stroke="#a0a0a0" stroke-opacity="0.13" stroke-width="1"/><path d="M0 317.7H1518" stroke="#a0a0a0" stroke-opacity="0.13" stroke-width="1"/><path d="M0 269.1H1518" stroke="#a0a0a0" stroke-opacity="0.13" stroke-width="1"/><path d="M0 220.5H1518" stroke="#8c8884" stroke-opacity="0.6" stroke-width="1"/><path d="M0 171.9H1518" stroke="#a0a0a0" stroke-opacity="0.13" stroke-width="1"/><path d="M0 123.3H1518" stroke="#a0a0a0" stroke-opacity="0.13" stroke-width="1"/><path d="M0 74.7H1518" stroke="#a0a0a0" stroke-opacity="0.13" stroke-width="1"/><path d="M0 26.1H1518" stroke="#a0a0a0" stroke-opacity="0.13" stroke-width="1"/><path d="M0 706.5H387" stroke="#a09d9a" stroke-opacity=".85" stroke-width="1"/><path d="M387.5 0V755" stroke="#a8a8a8" stroke-opacity=".55" stroke-width="1"/><g opacity=".5" filter="url(#jb)"><circle cx="562" cy="531" r="165" fill="none" stroke="#3a3532" stroke-width="16"/><circle cx="562" cy="531" r="46.500" fill="none" stroke="#3a3532" stroke-width="4.500"/><path d="M562 396L576 418H548Z" fill="#3a3532" stroke="#3a3532" stroke-width="2" stroke-linejoin="round"/><path d="M562 666L576 644H548Z" fill="#3a3532" stroke="#3a3532" stroke-width="2" stroke-linejoin="round"/><path d="M428 531L450 517V545Z" fill="#3a3532" stroke="#3a3532" stroke-width="2" stroke-linejoin="round"/><path d="M696 531L674 517V545Z" fill="#3a3532" stroke="#3a3532" stroke-width="2" stroke-linejoin="round"/></g><circle cx="562" cy="531" r="170" fill="#3a3532" opacity=".17"/><path d="M387.5 706V6.5H1518" fill="none" stroke="#fff" stroke-width="1" stroke-opacity=".95"/><path d="M737 706.5H1518" stroke="#f4f4f4" stroke-width="1.600"/><path d="M0 486.5L476 755.5" stroke="#fff" stroke-width="1.400"/><path d="M298 755.5L1518 68.5" stroke="#fff" stroke-width="1.400"/><rect x="387.5" y="356.5" width="350" height="350" fill="none" stroke="#b6e6b0" stroke-width="1.200"/><g stroke="#e8e8e8" stroke-width="1" fill="#8a8a8a" fill-opacity=".6"><path d="M384.5 703.5L377.5 701.5L382.5 696.5Z"/><path d="M390.5 703.5L397.5 701.5L392.5 696.5Z"/><path d="M384.5 709.5L377.5 711.5L382.5 716.5Z"/><path d="M390.5 709.5L397.5 711.5L392.5 716.5Z"/></g><circle cx="387.5" cy="356.5" r="4.300" fill="#1f7ae8" stroke="#1a3f78" stroke-width="1"/><circle cx="386.7" cy="355.5" r="2" fill="#4d9cf5"/><circle cx="737.5" cy="356.5" r="4.300" fill="#1f7ae8" stroke="#1a3f78" stroke-width="1"/><circle cx="736.7" cy="355.5" r="2" fill="#4d9cf5"/><circle cx="737.5" cy="706.5" r="4.300" fill="#1f7ae8" stroke="#1a3f78" stroke-width="1"/><circle cx="736.7" cy="705.5" r="2" fill="#4d9cf5"/><circle cx="387.5" cy="706.5" r="4.300" fill="#1f7ae8" stroke="#1a3f78" stroke-width="1"/><circle cx="386.7" cy="705.5" r="2" fill="#4d9cf5"/><circle cx="562" cy="531" r="4.800" fill="none" stroke="#3d6ea8" stroke-width="1.400"/></svg>
<div class="a " style="left:426px;top:120px;width:38px;height:147px;background:#0f131a;border-radius:4px"></div>
<div class="a " style="left:437px;top:126px;width:16px;height:1px;background:#5a5d62;"></div>
<div class="a " style="left:437px;top:129px;width:16px;height:1px;background:#5a5d62;"></div>
<div class="a " style="left:429px;top:138px;width:32px;height:20px;background:#585858;border-radius:4px 4px 0 0"></div>
<svg class="a" style="left:437px;top:140px;" width="16" height="16" viewBox="0 0 16 16"><g stroke="#d8d8d8" stroke-width="2.100" stroke-linecap="round"><path d="M5.200 11 1.700 6"/><path d="M6 9 4.700 2.300"/><path d="M8 9V1.300"/><path d="M10 9 11.300 2.300"/><path d="M10.800 11 14.300 5.500"/></g><path d="M3.800 9.500Q8 6.500 12.200 9.500L11.300 14.300Q8 16 4.700 14.300Z" fill="#d8d8d8"/></svg>
<div class="a " style="left:429px;top:159px;width:32px;height:20px;background:#585858;border-radius:0"></div>
<svg class="a" style="left:437px;top:161px;" width="16" height="16" viewBox="0 0 16 16"><path d="M8 1.500V6.300M8 9.700V14.500M1.500 8H6.300M9.700 8H14.500" stroke="#d8d8d8" stroke-width="1.200"/><path d="M5.800 3.400 8 1 10.200 3.400M5.800 12.600 8 15 10.200 12.600M3.400 5.800 1 8 3.400 10.200M12.600 5.800 15 8 12.600 10.200" fill="none" stroke="#d8d8d8" stroke-width="1.200"/></svg>
<div class="a " style="left:429px;top:180px;width:32px;height:20px;background:#585858;border-radius:0"></div>
<svg class="a" style="left:437px;top:182px;" width="16" height="16" viewBox="0 0 16 16"><path d="M4.300 13.600A6.200 6.200 0 0 1 7.200 1.900M11.700 2.400A6.200 6.200 0 0 1 8.800 14.100" fill="none" stroke="#d8d8d8" stroke-width="1.200"/><path d="M9 1.300H12.300V4.600M7 14.700H3.700V11.400" fill="none" stroke="#d8d8d8" stroke-width="1.200"/></svg>
<div class="a " style="left:429px;top:201px;width:32px;height:20px;background:#585858;border-radius:0"></div>
<svg class="a" style="left:437px;top:203px;" width="16" height="16" viewBox="0 0 16 16"><rect x="1.600" y="1.600" width="12.800" height="12.800" fill="none" stroke="#d8d8d8" stroke-width="1.200"/><rect x="1.600" y="10.400" width="4" height="4" fill="none" stroke="#d8d8d8" stroke-width="1.100"/><path d="M7 9 11.800 4.200M8.300 4.200H11.800V7.700" fill="none" stroke="#d8d8d8" stroke-width="1.100"/></svg>
<div class="a " style="left:429px;top:222px;width:32px;height:20px;background:#46607c;border-radius:0"></div>
<svg class="a" style="left:437px;top:224px;" width="16" height="16" viewBox="0 0 16 16"><path d="M4.500 2.500H11.500M4.500 13.500H11.500M2.500 4.500V11.500M13.500 4.500V11.500" stroke="#fff" stroke-width="1.200"/><rect x="1" y="1" width="3" height="3" fill="#fff"/><rect x="12" y="1" width="3" height="3" fill="#fff"/><rect x="1" y="12" width="3" height="3" fill="#fff"/><rect x="12" y="12" width="3" height="3" fill="#fff"/></svg>
<div class="a " style="left:429px;top:243px;width:32px;height:20px;background:#585858;border-radius:0 0 4px 4px"></div>
<svg class="a" style="left:437px;top:245px;" width="16" height="16" viewBox="0 0 16 16"><circle cx="8" cy="8" r="6.300" fill="none" stroke="#d8d8d8" stroke-width="1.100" stroke-dasharray="7.500 2.400" stroke-dashoffset="-1.200"/><path d="M8 4V12M4 8H12" stroke="#d8d8d8" stroke-width="1.200"/><path d="M6.500 5.300 8 3.500 9.500 5.300ZM6.500 10.700 8 12.500 9.500 10.700ZM5.300 6.500 3.500 8 5.300 9.500ZM10.700 6.500 12.500 8 10.700 9.500Z" fill="#d8d8d8"/><path d="M12.800 0.500H15.500V3.200ZM3.200 15.500H0.500V12.800Z" fill="#d8d8d8"/></svg>
<div class="a " style="left:1944px;top:73px;width:616px;height:1296px;background:#383838;"></div>
<div class="a " style="left:1944px;top:73px;width:616px;height:19px;background:#282828;"></div>
<div class="a " style="left:1944px;top:73px;width:92px;height:19px;background:#3c3c3c;border-radius:3px 3px 0 0"></div>
<svg class="a" style="left:1952px;top:78px;" width="11" height="11" viewBox="0 0 11 11"><circle cx="5.500" cy="5.500" r="5.300" fill="#c4c4c4"/><rect x="4.700" y="4.600" width="1.700" height="4.200" fill="#3c3c3c"/><rect x="4.700" y="2.200" width="1.700" height="1.600" fill="#3c3c3c"/></svg>
<div class="a t " style="top:75.5px;left:1968px;color:#d2d2d2;letter-spacing:0.065px;">Inspector</div>
<svg class="a" style="left:2047px;top:77.5px;" width="9" height="12" viewBox="0 0 9 12"><path d="M4.500 0.400A4.100 4.100 0 0 1 6.700 8V9H2.300V8A4.100 4.100 0 0 1 4.500 0.400Z" fill="#c4c4c4"/><rect x="2.700" y="9.800" width="3.600" height="1.700" rx=".8" fill="#c4c4c4"/></svg>
<div class="a t " style="top:75.5px;left:2062px;color:#c4c4c4;letter-spacing:0.152px;">Lighting</div>
<svg class="a" style="left:2524px;top:77px;" width="10" height="10" viewBox="0 0 10 10"><path d="M2.300 4.600V3Q2.300 0.800 5 0.800Q7.200 0.800 7.600 2.600" fill="none" stroke="#c4c4c4" stroke-width="1.100"/><rect x="1.100" y="4.600" width="7.800" height="4.600" rx="0.800" fill="none" stroke="#c4c4c4" stroke-width="1.200"/></svg>
<svg class="a" style="left:2544.5px;top:77px;" width="3" height="11" viewBox="0 0 3 11"><rect x="0.3" y="0" width="2.2" height="2.2" fill="#c4c4c4"/><rect x="0.3" y="4.3" width="2.2" height="2.2" fill="#c4c4c4"/><rect x="0.3" y="8.6" width="2.2" height="2.2" fill="#c4c4c4"/></svg>
<div class="a " style="left:1944px;top:92px;width:616px;height:55px;background:#3c3c3c;"></div>
<svg class="a" style="left:1950.5px;top:102px;" width="21" height="23" viewBox="0 0 22 24"><path d="M11 1.500 20.500 6V17.500L11 22.500 1.500 17.500V6Z M1.500 6 11 11 20.500 6 M11 11V22.500" fill="none" stroke="#c8c8c8" stroke-width="1.400" stroke-linejoin="round"/></svg>
<svg class="a" style="left:1970.5px;top:123px;" width="7" height="4" viewBox="0 0 7 4"><path d="M0 0H7L3.5 4Z" fill="#c4c4c4"/></svg>
<div class="a cb" style="left:1991px;top:103px"><svg width="14" height="14" viewBox="0 0 14 14" style="position:absolute;left:-1px;top:-1px"><path d="M3.2 7.2 5.8 9.8 11 4.2" fill="none" stroke="#e4e4e4" stroke-width="1.6"/></svg></div>
<div class="a f" style="left:2011px;top:101px;width:469px;height:18px;"></div>
<div class="a t " style="top:102.5px;left:2014.5px;color:#e4e4e4;font-weight:bold;letter-spacing:0.015px;">leftBg</div>
<div class="a cb" style="left:2483px;top:103px"></div>
<div class="a t " style="top:102.5px;left:2501px;color:#c4c4c4;letter-spacing:0.206px;">Static</div>
<svg class="a" style="left:2546px;top:108.5px;" width="7" height="4" viewBox="0 0 7 4"><path d="M0 0H7L3.5 4Z" fill="#c4c4c4"/></svg>
<div class="a t " style="top:126.5px;left:1984.5px;color:#c4c4c4;letter-spacing:0.449px;">Tag</div>
<div class="a dd" style="left:2011px;top:125px;width:251px;height:18px;"></div>
<div class="a t " style="top:126px;left:2014px;color:#e4e4e4;letter-spacing:0.099px;">Untagged</div>
<svg class="a" style="left:2249px;top:132.5px;" width="7" height="4" viewBox="0 0 7 4"><path d="M0 0H7L3.5 4Z" fill="#c4c4c4"/></svg>
<div class="a t " style="top:126.5px;left:2277px;color:#c4c4c4;letter-spacing:0.147px;">Layer</div>
<div class="a dd" style="left:2314px;top:125px;width:241px;height:18px;"></div>
<div class="a t " style="top:126px;left:2317px;color:#e4e4e4;letter-spacing:-0.25px;">UI</div>
<svg class="a" style="left:2542px;top:132.5px;" width="7" height="4" viewBox="0 0 7 4"><path d="M0 0H7L3.5 4Z" fill="#c4c4c4"/></svg>
<div class="a " style="left:1944px;top:151px;width:616px;height:22px;background:#3e3e3e;border-top:1px solid #1f1f1f"></div><svg class="a" style="left:1950.5px;top:159.0px;" width="8.5" height="8" viewBox="0 0 8.5 8"><path d="M0 0H8.5L4.25 8Z" fill="#7d7d7d"/></svg><div class="a t " style="top:154.5px;left:2004px;color:#e0e0e0;font-weight:bold;letter-spacing:-0.049px;">Rect Transform</div><svg class="a" style="left:2501.5px;top:157.0px;" width="11" height="11" viewBox="0 0 11 11"><circle cx="5.500" cy="5.500" r="5.300" fill="#c4c4c4"/><path d="M3.700 4.300Q3.700 2.600 5.500 2.600Q7.300 2.600 7.300 4.200Q7.300 5.200 6.300 5.700Q5.500 6.100 5.500 7" fill="none" stroke="#3e3e3e" stroke-width="1.300"/><rect x="4.800" y="7.800" width="1.400" height="1.400" fill="#3e3e3e"/></svg><svg class="a" style="left:2521px;top:156.5px;" width="12" height="12" viewBox="0 0 12 12"><path d="M0.500 3H6.500M9 3H11.500M0.500 8.500H2.500M5 8.500H11.500" stroke="#c4c4c4" stroke-width="1.200"/><path d="M7.800 0.500V5.500M3.800 6V11" stroke="#c4c4c4" stroke-width="1.300"/></svg><svg class="a" style="left:2545.2px;top:157.0px;" width="3" height="11" viewBox="0 0 3 11"><rect x="0.3" y="0" width="2.2" height="2.2" fill="#c4c4c4"/><rect x="0.3" y="4.3" width="2.2" height="2.2" fill="#c4c4c4"/><rect x="0.3" y="8.6" width="2.2" height="2.2" fill="#c4c4c4"/></svg>
<svg class="a" style="left:1966px;top:156px;" width="13" height="13" viewBox="0 0 13 13"><path d="M5.300 5.300 0.800 3.300 3.300 0.800Z M7.700 5.300 12.200 3.300 9.700 0.800Z M5.300 7.700 0.800 9.700 3.300 12.200Z M7.700 7.700 12.200 9.700 9.700 12.200Z" fill="#d0d0d0" stroke="#d0d0d0" stroke-width=".6" stroke-linejoin="round"/></svg>
<div class="a t " style="top:181px;left:1980px;color:#b8b8b8;font-size:10px;letter-spacing:0.414px;">left</div>
<div class="a t" style="left:1938.500px;top:211px;width:40px;text-align:center;transform:rotate(-90deg);transform-origin:center;font-size:10px;letter-spacing:0.471px;color:#b8b8b8">bottom</div>
<div class="a " style="left:1971px;top:201px;width:35px;height:35px;border:1px solid #5e5e5e;border-left-color:#c04a44;border-bottom-color:#c04a44"></div>
<div class="a " style="left:1980px;top:210px;width:17px;height:17px;border:1px solid #9a9a9a"></div>
<div class="a " style="left:1969.7px;top:233.8px;width:3.2px;height:3.2px;background:#e8a800;"></div>
<div class="a t " style="top:181px;left:2199px;color:#c4c4c4;letter-spacing:-0.37px;">Pos X</div>
<div class="a t " style="top:181px;left:2319px;color:#c4c4c4;letter-spacing:-0.325px;">Pos Y</div>
<div class="a t " style="top:181px;left:2439px;color:#c4c4c4;letter-spacing:-0.229px;">Pos Z</div>
<div class="a f" style="left:2198px;top:197px;width:118px;height:18px;"></div><div class="a t " style="top:198.5px;left:2201.5px;color:#d2d2d2;">0</div>
<div class="a f" style="left:2318px;top:197px;width:118px;height:18px;"></div><div class="a t " style="top:198.5px;left:2321.5px;color:#d2d2d2;">0</div>
<div class="a f" style="left:2438.5px;top:197px;width:117px;height:18px;"></div><div class="a t " style="top:198.5px;left:2442.0px;color:#d2d2d2;">0</div>
<div class="a t " style="top:217px;left:2199px;color:#c4c4c4;letter-spacing:0.01px;">Width</div>
<div class="a t " style="top:217px;left:2319px;color:#c4c4c4;letter-spacing:0.145px;">Height</div>
<div class="a f" style="left:2198px;top:233px;width:118px;height:18px;"></div><div class="a t " style="top:234.5px;left:2201.5px;color:#d2d2d2;">720</div>
<div class="a f" style="left:2318px;top:233px;width:118px;height:18px;"></div><div class="a t " style="top:234.5px;left:2321.5px;color:#d2d2d2;">720</div>
<div class="a " style="left:2505px;top:232.5px;width:24px;height:17.5px;background:#505050;border:1px solid #2e2e2e;border-radius:3px 0 0 3px"></div>
<svg class="a" style="left:2511px;top:236px;" width="11" height="10" viewBox="0 0 11 10"><rect x="0.500" y="0.500" width="10" height="9" fill="none" stroke="#8a8a8a" stroke-width="1" stroke-dasharray="2 1.500"/></svg>
<div class="a " style="left:2529px;top:232.5px;width:26px;height:17.5px;background:#505050;border:1px solid #2e2e2e;border-left:none;border-radius:0 3px 3px 0"></div>
<div class="a t " style="top:233.5px;left:2538px;color:#8a8a8a;font-size:11.5px;">R</div>
<svg class="a" style="left:1951px;top:259.5px;" width="8.5" height="8" viewBox="0 0 8.5 8"><path d="M0 0H8.5L4.25 8Z" fill="#7d7d7d"/></svg>
<div class="a t " style="top:255px;left:1963px;color:#c4c4c4;letter-spacing:0.021px;">Anchors</div>
<div class="a t " style="top:273px;left:1978px;color:#c4c4c4;letter-spacing:0.036px;">Min</div><div class="a t " style="top:273px;left:2199px;color:#c4c4c4;">X</div><div class="a f" style="left:2210px;top:271px;width:106px;height:18px;"></div><div class="a t " style="top:272.5px;left:2213.5px;color:#d2d2d2;">0</div><div class="a t " style="top:273px;left:2319px;color:#c4c4c4;">Y</div><div class="a f" style="left:2330px;top:271px;width:106px;height:18px;"></div><div class="a t " style="top:272.5px;left:2333.5px;color:#d2d2d2;">0</div>
<div class="a t " style="top:293px;left:1978px;color:#c4c4c4;letter-spacing:0.046px;">Max</div><div class="a t " style="top:293px;left:2199px;color:#c4c4c4;">X</div><div class="a f" style="left:2210px;top:291px;width:106px;height:18px;"></div><div class="a t " style="top:292.5px;left:2213.5px;color:#d2d2d2;">0</div><div class="a t " style="top:293px;left:2319px;color:#c4c4c4;">Y</div><div class="a f" style="left:2330px;top:291px;width:106px;height:18px;"></div><div class="a t " style="top:292.5px;left:2333.5px;color:#d2d2d2;">0</div>
<div class="a t " style="top:314.5px;left:1963px;color:#c4c4c4;letter-spacing:0.242px;">Pivot</div><div class="a t " style="top:314.5px;left:2199px;color:#c4c4c4;">X</div><div class="a f" style="left:2210px;top:313px;width:106px;height:18px;"></div><div class="a t " style="top:314.5px;left:2213.5px;color:#d2d2d2;">0</div><div class="a t " style="top:314.5px;left:2319px;color:#c4c4c4;">Y</div><div class="a f" style="left:2330px;top:313px;width:106px;height:18px;"></div><div class="a t " style="top:314.5px;left:2333.5px;color:#d2d2d2;">0</div>
<div class="a t " style="top:343px;left:1963px;color:#c4c4c4;letter-spacing:-0.007px;">Rotation</div><div class="a t " style="top:343px;left:2202.5px;color:#c4c4c4;">X</div><div class="a f" style="left:2216px;top:341px;width:101px;height:18px;"></div><div class="a t " style="top:342.5px;left:2219.5px;color:#d2d2d2;">0</div><div class="a t " style="top:343px;left:2322.5px;color:#c4c4c4;">Y</div><div class="a f" style="left:2336px;top:341px;width:101px;height:18px;"></div><div class="a t " style="top:342.5px;left:2339.5px;color:#d2d2d2;">0</div><div class="a t " style="top:343px;left:2442.5px;color:#c4c4c4;">Z</div><div class="a f" style="left:2455px;top:341px;width:100px;height:18px;"></div><div class="a t " style="top:342.5px;left:2458.5px;color:#d2d2d2;">0</div>
<div class="a t " style="top:363px;left:1963px;color:#c4c4c4;letter-spacing:0.046px;">Scale</div><div class="a t " style="top:363px;left:2202.5px;color:#c4c4c4;">X</div><div class="a f" style="left:2216px;top:361px;width:101px;height:18px;"></div><div class="a t " style="top:362.5px;left:2219.5px;color:#d2d2d2;">1</div><div class="a t " style="top:363px;left:2322.5px;color:#c4c4c4;">Y</div><div class="a f" style="left:2336px;top:361px;width:101px;height:18px;"></div><div class="a t " style="top:362.5px;left:2339.5px;color:#d2d2d2;">1</div><div class="a t " style="top:363px;left:2442.5px;color:#c4c4c4;">Z</div><div class="a f" style="left:2455px;top:361px;width:100px;height:18px;"></div><div class="a t " style="top:362.5px;left:2458.5px;color:#d2d2d2;">1</div>
<svg class="a" style="left:2179.5px;top:365px;" width="14" height="11" viewBox="0 0 14 11"><path d="M5.500 3H4Q1 3 1 5.500Q1 8 4 8H5.500M8.500 3H10Q13 3 13 5.500Q13 8 10 8H8.500" fill="none" stroke="#c4c4c4" stroke-width="1.300"/><path d="M2.500 0.800 11.500 10.200" stroke="#c4c4c4" stroke-width="1.200"/></svg>
<div class="a " style="left:1944px;top:390px;width:616px;height:20.5px;background:#3e3e3e;border-top:1px solid #1f1f1f"></div><svg class="a" style="left:1950.5px;top:397.25px;" width="8.5" height="8" viewBox="0 0 8.5 8"><path d="M0 0H8.5L4.25 8Z" fill="#7d7d7d"/></svg><div class="a t " style="top:392.75px;left:2004px;color:#e0e0e0;font-weight:bold;letter-spacing:-0.188px;">Canvas Renderer</div><svg class="a" style="left:2501.5px;top:395.25px;" width="11" height="11" viewBox="0 0 11 11"><circle cx="5.500" cy="5.500" r="5.300" fill="#c4c4c4"/><path d="M3.700 4.300Q3.700 2.600 5.500 2.600Q7.300 2.600 7.300 4.200Q7.300 5.200 6.300 5.700Q5.500 6.100 5.500 7" fill="none" stroke="#3e3e3e" stroke-width="1.300"/><rect x="4.800" y="7.800" width="1.400" height="1.400" fill="#3e3e3e"/></svg><svg class="a" style="left:2521px;top:394.75px;" width="12" height="12" viewBox="0 0 12 12"><path d="M0.500 3H6.500M9 3H11.500M0.500 8.500H2.500M5 8.500H11.500" stroke="#c4c4c4" stroke-width="1.200"/><path d="M7.800 0.500V5.500M3.800 6V11" stroke="#c4c4c4" stroke-width="1.300"/></svg><svg class="a" style="left:2545.2px;top:395.25px;" width="3" height="11" viewBox="0 0 3 11"><rect x="0.3" y="0" width="2.2" height="2.2" fill="#c4c4c4"/><rect x="0.3" y="4.3" width="2.2" height="2.2" fill="#c4c4c4"/><rect x="0.3" y="8.6" width="2.2" height="2.2" fill="#c4c4c4"/></svg>
<svg class="a" style="left:1964.5px;top:394.5px;" width="16" height="11" viewBox="0 0 16 11"><path d="M0.800 5.500Q8 -1.800 15.200 5.500Q8 12.800 0.800 5.500Z" fill="none" stroke="#d0d0d0" stroke-width="1.200"/><circle cx="8" cy="5.500" r="2.600" fill="none" stroke="#d0d0d0" stroke-width="1.200"/><circle cx="8" cy="5.500" r="1" fill="#d0d0d0"/></svg>
<div class="a t " style="top:416px;left:1963px;color:#c4c4c4;letter-spacing:0.06px;">Cull Transparent Mesh</div>
<div class="a cb" style="left:2201px;top:416px"><svg width="14" height="14" viewBox="0 0 14 14" style="position:absolute;left:-1px;top:-1px"><path d="M3.2 7.2 5.8 9.8 11 4.2" fill="none" stroke="#e4e4e4" stroke-width="1.6"/></svg></div>
<div class="a " style="left:1944px;top:441px;width:616px;height:21px;background:#3e3e3e;border-top:1px solid #1f1f1f"></div><svg class="a" style="left:1950.5px;top:448.5px;" width="8.5" height="8" viewBox="0 0 8.5 8"><path d="M0 0H8.5L4.25 8Z" fill="#7d7d7d"/></svg><div class="a t " style="top:444.0px;left:2004px;color:#e0e0e0;font-weight:bold;letter-spacing:-0.025px;">Image</div><svg class="a" style="left:2501.5px;top:446.5px;" width="11" height="11" viewBox="0 0 11 11"><circle cx="5.500" cy="5.500" r="5.300" fill="#c4c4c4"/><path d="M3.700 4.300Q3.700 2.600 5.500 2.600Q7.300 2.600 7.300 4.200Q7.300 5.200 6.300 5.700Q5.500 6.100 5.500 7" fill="none" stroke="#3e3e3e" stroke-width="1.300"/><rect x="4.800" y="7.800" width="1.400" height="1.400" fill="#3e3e3e"/></svg><svg class="a" style="left:2521px;top:446.0px;" width="12" height="12" viewBox="0 0 12 12"><path d="M0.500 3H6.500M9 3H11.500M0.500 8.500H2.500M5 8.500H11.500" stroke="#c4c4c4" stroke-width="1.200"/><path d="M7.800 0.500V5.500M3.800 6V11" stroke="#c4c4c4" stroke-width="1.300"/></svg><svg class="a" style="left:2545.2px;top:446.5px;" width="3" height="11" viewBox="0 0 3 11"><rect x="0.3" y="0" width="2.2" height="2.2" fill="#c4c4c4"/><rect x="0.3" y="4.3" width="2.2" height="2.2" fill="#c4c4c4"/><rect x="0.3" y="8.6" width="2.2" height="2.2" fill="#c4c4c4"/></svg>
<svg class="a" style="left:1965px;top:445px;" width="15" height="14" viewBox="0 0 15 14"><rect x="2" y="2" width="11" height="10" fill="none" stroke="#d0d0d0" stroke-width="1.200"/><path d="M0 0.600H3M0.600 0V3M12 0.600H15M14.400 0V3M0 13.400H3M0.600 11V14M12 13.400H15M14.400 11V14" stroke="#d0d0d0" stroke-width="1.100"/><path d="M3 11 6 7 8 9.500 10 8 12 11Z" fill="#d0d0d0"/><circle cx="9.500" cy="5" r="1.200" fill="#d0d0d0"/></svg>
<div class="a cb" style="left:1984px;top:445px"><svg width="14" height="14" viewBox="0 0 14 14" style="position:absolute;left:-1px;top:-1px"><path d="M3.2 7.2 5.8 9.8 11 4.2" fill="none" stroke="#e4e4e4" stroke-width="1.6"/></svg></div>
<div class="a t " style="top:469px;left:1963px;color:#c4c4c4;letter-spacing:-0.11px;">Source Image</div>
<div class="a f" style="left:2201px;top:467px;width:354px;height:18px;"></div>
<svg class="a" style="left:2205px;top:471px;" width="10" height="10" viewBox="0 0 10 10"><path d="M0.500 2.500V0.500H2.500M7.500 0.500H9.500V2.500M9.500 7.500V9.500H7.500M2.500 9.500H0.500V7.500" fill="none" stroke="#8a5fd0" stroke-width="1"/><rect x="3" y="3" width="4" height="4" fill="#d8d8d8"/></svg>
<div class="a t " style="top:469px;left:2217.5px;color:#d2d2d2;letter-spacing:-0.086px;">joystick_circle_pad_a</div>
<div class="a " style="left:2537px;top:468px;width:17.5px;height:16px;background:#373737;border-radius:0 2px 2px 0"></div><svg class="a" style="left:2540px;top:470px;" width="12" height="12" viewBox="0 0 12 12"><circle cx="6" cy="6" r="4.600" fill="none" stroke="#c4c4c4" stroke-width="1.100"/><circle cx="6" cy="6" r="1.700" fill="#c4c4c4"/></svg>
<div class="a t " style="top:489px;left:1963px;color:#c4c4c4;letter-spacing:0.026px;">Color</div>
<div class="a " style="left:2201px;top:487px;width:354px;height:18px;background:#2a2a2a;border-radius:3px;border:1px solid #212121"></div>
<div class="a " style="left:2202px;top:488px;width:335px;height:16px;background:#ffffff;border-radius:2px 0 0 2px"></div>
<svg class="a" style="left:2540px;top:489.5px;" width="13" height="13" viewBox="0 0 13 13"><path d="M1 12 2 9 8 3 10 5 4 11Z M9 2 10.500 0.500 12.500 2.500 11 4Z" fill="#c4c4c4"/></svg>
<div class="a t " style="top:509px;left:1963px;color:#c4c4c4;letter-spacing:0.131px;">Material</div>
<div class="a f" style="left:2201px;top:507px;width:354px;height:18px;"></div>
<div class="a t " style="top:508.5px;left:2204px;color:#d2d2d2;letter-spacing:0.058px;">None (Material)</div>
<div class="a " style="left:2537px;top:508px;width:17.5px;height:16px;background:#373737;border-radius:0 2px 2px 0"></div><svg class="a" style="left:2540px;top:510px;" width="12" height="12" viewBox="0 0 12 12"><circle cx="6" cy="6" r="4.600" fill="none" stroke="#c4c4c4" stroke-width="1.100"/><circle cx="6" cy="6" r="1.700" fill="#c4c4c4"/></svg>
<div class="a t " style="top:529px;left:1963px;color:#c4c4c4;letter-spacing:0.205px;">Raycast Target</div>
<div class="a cb" style="left:2201px;top:529px"><svg width="14" height="14" viewBox="0 0 14 14" style="position:absolute;left:-1px;top:-1px"><path d="M3.2 7.2 5.8 9.8 11 4.2" fill="none" stroke="#e4e4e4" stroke-width="1.6"/></svg></div>
<svg class="a" style="left:1952px;top:552.5px;" width="8" height="8.5" viewBox="0 0 8 8.5"><path d="M0 0V8.5L8 4.25Z" fill="#7d7d7d"/></svg>
<div class="a t " style="top:549px;left:1963px;color:#c4c4c4;letter-spacing:0.034px;">Raycast Padding</div>
<div class="a t " style="top:571px;left:1963px;color:#c4c4c4;letter-spacing:0.126px;">Maskable</div>
<div class="a cb" style="left:2201px;top:571px"><svg width="14" height="14" viewBox="0 0 14 14" style="position:absolute;left:-1px;top:-1px"><path d="M3.2 7.2 5.8 9.8 11 4.2" fill="none" stroke="#e4e4e4" stroke-width="1.6"/></svg></div>
<div class="a t " style="top:591px;left:1963px;color:#c4c4c4;letter-spacing:0.042px;">Image Type</div>
<div class="a dd" style="left:2201px;top:589px;width:354px;height:18px;"></div>
<div class="a t " style="top:590px;left:2205px;color:#e4e4e4;letter-spacing:-0.118px;">Simple</div>
<svg class="a" style="left:2542.5px;top:596.5px;" width="7" height="4" viewBox="0 0 7 4"><path d="M0 0H7L3.5 4Z" fill="#c4c4c4"/></svg>
<div class="a t " style="top:611px;left:1978px;color:#c4c4c4;letter-spacing:-0.059px;">Use Sprite Mesh</div>
<div class="a cb" style="left:2201px;top:611px"></div>
<div class="a t " style="top:631px;left:1978px;color:#c4c4c4;letter-spacing:0.066px;">Preserve Aspect</div>
<div class="a cb" style="left:2201px;top:631px"></div>
<div class="a btn" style="left:2199.5px;top:649px;width:356px;height:18px;"></div>
<div class="a t " style="top:650px;left:2177.5px;width:400px;text-align:center;color:#e4e4e4;letter-spacing:0.07px;">Set Native Size</div>
<div class="a " style="left:1944px;top:675px;width:616px;height:1px;background:#1f1f1f;"></div>
<div class="a " style="left:1960px;top:682px;width:32px;height:32px;background:#4a4a4a;"></div>
<div class="a " style="left:1964px;top:686px;width:24px;height:24px;background:#ffffff;"></div>
<div class="a t " style="top:681.5px;left:2000px;color:#9a9a9a;font-size:13px;letter-spacing:0.428px;">Default UI Material (Material)</div>
<svg class="a" style="left:2530.5px;top:684px;" width="11" height="11" viewBox="0 0 11 11"><circle cx="5.500" cy="5.500" r="5.300" fill="#c4c4c4"/><path d="M3.700 4.300Q3.700 2.600 5.500 2.600Q7.300 2.600 7.300 4.200Q7.300 5.200 6.300 5.700Q5.500 6.100 5.500 7" fill="none" stroke="#383838" stroke-width="1.300"/><rect x="4.800" y="7.800" width="1.400" height="1.400" fill="#383838"/></svg>
<svg class="a" style="left:2550.2px;top:684.5px;" width="3" height="11" viewBox="0 0 3 11"><rect x="0.3" y="0" width="2.2" height="2.2" fill="#c4c4c4"/><rect x="0.3" y="4.3" width="2.2" height="2.2" fill="#c4c4c4"/><rect x="0.3" y="8.6" width="2.2" height="2.2" fill="#c4c4c4"/></svg>
<svg class="a" style="left:1951px;top:714.5px;" width="8" height="8.5" viewBox="0 0 8 8.5"><path d="M0 0V8.5L8 4.25Z" fill="#7d7d7d"/></svg>
<div class="a t " style="top:705.5px;left:1997.5px;color:#7e7e7e;letter-spacing:-0.134px;">Shader</div>
<div class="a " style="left:2049px;top:705px;width:412px;height:16px;background:#484848;border:1px solid #333;border-radius:3px"></div>
<div class="a t " style="top:705px;left:2052px;color:#808080;letter-spacing:0.142px;">UI/Default</div>
<svg class="a" style="left:2448px;top:711.5px;" width="7" height="4" viewBox="0 0 7 4"><path d="M0 0H7L3.5 4Z" fill="#6e6e6e"/></svg>
<div class="a btn" style="left:2466px;top:705px;width:42px;height:16px;background:#515151"></div>
<div class="a t " style="top:705px;left:2472px;color:#e4e4e4;letter-spacing:-0.28px;">Edit...</div>
<div class="a btn" style="left:2512.5px;top:705px;width:42.5px;height:16px;background:#515151"></div>
<svg class="a" style="left:2521px;top:708.5px;" width="11" height="9" viewBox="0 0 11 9"><path d="M3 1H11M3 4.500H11M3 8H11" stroke="#c4c4c4" stroke-width="1.100"/><path d="M0 1H1.800M0 4.500H1.800M0 8H1.800" stroke="#c4c4c4" stroke-width="1.100"/></svg>
<svg class="a" style="left:2542.5px;top:711.5px;" width="7" height="4" viewBox="0 0 7 4"><path d="M0 0H7L3.5 4Z" fill="#c4c4c4"/></svg>
<div class="a " style="left:1944px;top:730.5px;width:616px;height:1px;background:#1f1f1f;"></div>
<div class="a " style="left:1944px;top:741px;width:616px;height:1px;background:#1f1f1f;"></div>
<div class="a btn" style="left:2137.5px;top:751px;width:228.5px;height:22px;"></div>
<div class="a t " style="top:754px;left:2052px;width:400px;text-align:center;color:#e4e4e4;letter-spacing:-0.064px;">Add Component</div>
<div class="a hl" style="left:1940.5px;top:146px;width:620.5px;height:247px;"></div>
<div class="a hl" style="left:2177.5px;top:457.5px;width:383.5px;height:35px;"></div>
<div class="a " style="left:1944px;top:877px;width:616px;height:1px;background:#1f1f1f;"></div>
<div class="a " style="left:1944px;top:878px;width:616px;height:21px;background:#3c3c3c;border-bottom:1px solid #262626"></div>
<div class="a " style="left:1948px;top:878px;width:1px;height:20px;background:#2c2c2c;"></div>
<div class="a t " style="top:880.5px;left:1952.5px;color:#e0e0e0;font-weight:bold;letter-spacing:-0.152px;">leftBg</div>
<svg class="a" style="left:1991px;top:886.5px;" width="7.5" height="4" viewBox="0 0 7.5 4"><path d="M0 0H7.5L3.75 4Z" fill="#c4c4c4"/></svg>
<div class="a " style="left:2003px;top:878px;width:1px;height:20px;background:#2a2a2a;"></div>
<div class="a " style="left:2007px;top:886.5px;width:534px;height:1px;background:#5a5a5a;"></div>
<div class="a " style="left:2007px;top:889px;width:534px;height:1px;background:#5a5a5a;"></div>
<div class="a " style="left:2543.5px;top:878px;width:1px;height:20px;background:#2a2a2a;"></div>
<svg class="a" style="left:2550.2px;top:882.5px;" width="3" height="11" viewBox="0 0 3 11"><rect x="0.3" y="0" width="2.2" height="2.2" fill="#c4c4c4"/><rect x="0.3" y="4.3" width="2.2" height="2.2" fill="#c4c4c4"/><rect x="0.3" y="8.6" width="2.2" height="2.2" fill="#c4c4c4"/></svg>
<div class="a " style="left:1944px;top:899px;width:616px;height:464px;background:#323232;"></div>
<div class="a " style="left:2019px;top:899px;width:465px;height:464px;background-color:#474747;background-image:conic-gradient(#686868 25%,#474747 0 50%,#686868 0 75%,#474747 0);background-size:32px 32px;background-position:-8px -8px;overflow:hidden"></div>
<svg class="a" style="left:2019px;top:899px;" width="465" height="464" viewBox="0 0 465 464"><defs><filter id="pb"><feGaussianBlur stdDeviation="0.900"/></filter></defs><g filter="url(#pb)"><circle cx="232.5" cy="232" r="225" fill="#000000" opacity=".16"/><circle cx="232.5" cy="232" r="220.500" fill="none" stroke="#000000" stroke-width="23" opacity=".32"/><circle cx="232.5" cy="232" r="209.500" fill="none" stroke="#000000" stroke-width="1.500" opacity=".25"/><g fill="#000000" stroke="#000000" stroke-width="3" stroke-linejoin="round" opacity=".45"><path d="M232.5 57L248.5 82H216.5Z"/><path d="M232.5 407L248.5 382H216.5Z"/><path d="M57.5 232L82.5 216V248Z"/><path d="M407.5 232L382.5 216V248Z"/></g></g></svg>
<div class="a t" style="left:2050px;width:400px;top:1329px;text-align:center;color:#e8e8e8;font-weight:bold;font-size:12px;text-shadow:0 1px 1px #000,0 0 2px #000">leftBg</div>
<div class="a t" style="left:2050px;width:400px;top:1344px;text-align:center;color:#e8e8e8;font-weight:bold;font-size:12px;text-shadow:0 1px 1px #000,0 0 2px #000;letter-spacing:.2px">Image Size: 256x256</div>
<div class="a " style="left:1944px;top:1363px;width:616px;height:1px;background:#232323;"></div>
<div class="a " style="left:1944px;top:1364px;width:616px;height:6px;background:#3c3c3c;"></div>
<div class="a " style="left:0px;top:875px;width:1942px;height:494px;background:#383838;"></div>
<div class="a " style="left:0px;top:875px;width:1942px;height:19px;background:#282828;"></div>
<div class="a " style="left:272px;top:875px;width:86px;height:19px;background:#3c3c3c;border-radius:3px 3px 0 0"></div>
<svg class="a" style="left:7px;top:879.5px;" width="12" height="10" viewBox="0 0 12 10"><path d="M0.300 1Q0.300 0.300 1 0.300H4.500L5.800 1.800H11Q11.700 1.800 11.700 2.500V9Q11.700 9.700 11 9.700H1Q0.300 9.700 0.300 9Z" fill="#c4c4c4"/></svg>
<div class="a t " style="top:877.5px;left:23.3px;color:#c4c4c4;letter-spacing:0.114px;">Project</div>
<svg class="a" style="left:90.5px;top:879.5px;" width="11" height="10" viewBox="0 0 11 10"><path d="M0.800 0.800 4.500 5 0.800 9.200M4.500 5H10M7.500 2.500 10.200 5 7.500 7.500" fill="none" stroke="#c4c4c4" stroke-width="1.300"/></svg>
<div class="a t " style="top:877.5px;left:105.5px;color:#c4c4c4;letter-spacing:-0.064px;">Animator</div>
<svg class="a" style="left:180.5px;top:879px;" width="12" height="12" viewBox="0 0 12 12"><circle cx="6" cy="6" r="5.800" fill="#c4c4c4"/><path d="M6 2V6.300H10" fill="none" stroke="#282828" stroke-width="1.300"/></svg>
<div class="a t " style="top:877.5px;left:197.5px;color:#c4c4c4;letter-spacing:-0.065px;">Animation</div>
<svg class="a" style="left:279.5px;top:879px;" width="11" height="11" viewBox="0 0 11 11"><rect x="0.300" y="0.300" width="10.400" height="10.400" rx="1" fill="#c4c4c4"/><path d="M2 3H9M2 5.500H9M2 8H7" stroke="#3c3c3c" stroke-width="1.100"/></svg>
<div class="a t " style="top:877.5px;left:295px;color:#d2d2d2;letter-spacing:-0.051px;">Console</div>
<svg class="a" style="left:366.5px;top:879px;" width="12" height="12" viewBox="0 0 12 12"><path d="M2 0V12M6 0V12M10 0V12" stroke="#c4c4c4" stroke-width="1.100"/><rect x="0.500" y="6.500" width="3" height="2.400" fill="#c4c4c4"/><rect x="4.500" y="2.500" width="3" height="2.400" fill="#c4c4c4"/><rect x="8.500" y="5" width="3" height="2.400" fill="#c4c4c4"/></svg>
<div class="a t " style="top:877.5px;left:383.3px;color:#c4c4c4;letter-spacing:0.001px;">Audio Mixer</div>
<svg class="a" style="left:1927.5px;top:879px;" width="3" height="11" viewBox="0 0 3 11"><rect x="0.3" y="0" width="2.2" height="2.2" fill="#c4c4c4"/><rect x="0.3" y="4.3" width="2.2" height="2.2" fill="#c4c4c4"/><rect x="0.3" y="8.6" width="2.2" height="2.2" fill="#c4c4c4"/></svg>
<div class="a " style="left:0px;top:894px;width:1942px;height:21px;background:#3c3c3c;border-bottom:1px solid #232323"></div>
<div class="a t " style="top:897px;left:4.3px;color:#c4c4c4;letter-spacing:-0.074px;">Clear</div>
<div class="a " style="left:39.5px;top:899px;width:1px;height:11px;background:#2a2a2a;"></div>
<svg class="a" style="left:44.5px;top:903px;" width="7" height="4" viewBox="0 0 7 4"><path d="M0 0H7L3.5 4Z" fill="#c4c4c4"/></svg>
<div class="a " style="left:56px;top:894px;width:1px;height:20px;background:#2a2a2a;"></div>
<div class="a " style="left:57px;top:894px;width:58.5px;height:20px;background:#505050;"></div>
<div class="a t " style="top:897px;left:60.5px;color:#c4c4c4;letter-spacing:-0.117px;">Collapse</div>
<div class="a " style="left:115.5px;top:894px;width:1px;height:20px;background:#2a2a2a;"></div>
<div class="a t " style="top:897px;left:120.5px;color:#c4c4c4;letter-spacing:-0.363px;">Error Pause</div>
<div class="a " style="left:189px;top:894px;width:1px;height:20px;background:#2a2a2a;"></div>
<div class="a t " style="top:897px;left:193.3px;color:#c4c4c4;letter-spacing:-0.159px;">Editor</div>
<svg class="a" style="left:228.3px;top:903px;" width="7.3" height="4" viewBox="0 0 7.3 4"><path d="M0 0H7.3L3.65 4Z" fill="#c4c4c4"/></svg>
<div class="a " style="left:240px;top:894px;width:1px;height:20px;background:#2a2a2a;"></div>
<div class="a f" style="left:1537px;top:896px;width:300px;height:16px;border-radius:4px"></div>
<svg class="a" style="left:1541.5px;top:899.5px;" width="8" height="9" viewBox="0 0 8 9"><circle cx="3" cy="3" r="2.200" fill="none" stroke="#c4c4c4" stroke-width="1.100"/><path d="M4.600 4.800 7.200 8" stroke="#c4c4c4" stroke-width="1.400"/></svg>
<div class="a " style="left:1839.5px;top:894px;width:33.7px;height:20px;background:#4d4d4d;"></div>
<div class="a " style="left:1873.2px;top:894px;width:1px;height:20px;background:#2a2a2a;"></div>
<div class="a " style="left:1874.2px;top:894px;width:33.7px;height:20px;background:#4d4d4d;"></div>
<div class="a " style="left:1907.9px;top:894px;width:1px;height:20px;background:#2a2a2a;"></div>
<div class="a " style="left:1908.2px;top:894px;width:33.7px;height:20px;background:#4d4d4d;"></div>
<div class="a " style="left:1941.9px;top:894px;width:1px;height:20px;background:#2a2a2a;"></div>
<svg class="a" style="left:1844.5px;top:897.5px;" width="14" height="14" viewBox="0 0 14 14"><circle cx="6.500" cy="6.500" r="6" fill="#8e8e8e"/><path d="M8 11 12.500 13.500 11 9Z" fill="#8e8e8e"/><rect x="5.800" y="2.500" width="1.500" height="5.500" fill="#4d4d4d"/><rect x="5.800" y="9" width="1.500" height="1.500" fill="#4d4d4d"/></svg>
<div class="a t " style="top:897px;left:1861px;color:#c4c4c4;">0</div>
<svg class="a" style="left:1878.5px;top:897.5px;" width="14" height="13" viewBox="0 0 14 13"><path d="M7 0.500 13.500 12.500H0.500Z" fill="#8e8e8e"/><rect x="6.300" y="4.500" width="1.400" height="4.500" fill="#4d4d4d"/><rect x="6.300" y="10" width="1.400" height="1.400" fill="#4d4d4d"/></svg>
<div class="a t " style="top:897px;left:1895.5px;color:#c4c4c4;">0</div>
<svg class="a" style="left:1913px;top:897.5px;" width="13" height="13" viewBox="0 0 13 13"><path d="M4 0.300H9L12.700 4V9L9 12.700H4L0.300 9V4Z" fill="#e4e4e4"/><rect x="5.700" y="2.500" width="1.600" height="5.500" fill="#4d4d4d"/><rect x="5.700" y="9" width="1.600" height="1.600" fill="#4d4d4d"/></svg>
<div class="a t " style="top:897px;left:1929.5px;color:#c4c4c4;">0</div>
<div class="a " style="left:0px;top:1232px;width:1942px;height:1px;background:#262626;"></div>
<div class="a " style="left:0px;top:1369px;width:2560px;height:23px;background:#191919;"></div>
<div class="a " style="left:2454px;top:1372px;width:1px;height:20px;background:#222222;"></div>
<div class="a " style="left:2480.5px;top:1372px;width:1px;height:20px;background:#222222;"></div>
<div class="a " style="left:2507px;top:1372px;width:1px;height:20px;background:#222222;"></div>
<div class="a " style="left:2533.5px;top:1372px;width:1px;height:20px;background:#222222;"></div>
<svg class="a" style="left:2459.5px;top:1374px;" width="16" height="16" viewBox="0 0 16 16"><ellipse cx="7.500" cy="9.300" rx="4.200" ry="5.200" fill="#c4c4c4"/><path d="M5 4.500Q7.500 0.800 10 4.500Z" fill="#c4c4c4"/><path d="M4.800 2.800 3.300 1.300M10.200 2.800 11.700 1.300M4 7.500 1 6M3.500 10H0.800M4 12.500 1.300 14.500M11 7.500 14 6M11.500 10H14.200M11 12.500 13.700 14.500" stroke="#c4c4c4" stroke-width="1.500"/><path d="M0 1.600 13.200 16.400" stroke="#191919" stroke-width="1.400"/><path d="M1 0.500 14.200 15.300" stroke="#c4c4c4" stroke-width="1.300"/></svg>
<svg class="a" style="left:2486px;top:1374px;" width="16" height="16" viewBox="0 0 16 16"><ellipse cx="7.500" cy="4" rx="6" ry="3" fill="#c4c4c4"/><path d="M1.500 6.500Q7.500 10.500 13.500 6.500V9.300Q7.500 13.300 1.500 9.300Z M1.500 10.800Q7.500 14.800 13.500 10.800V12.800Q7.500 16.500 1.500 12.800Z" fill="#c4c4c4"/><path d="M0 1.600 13.200 16.400" stroke="#191919" stroke-width="1.400"/><path d="M1 0.500 14.200 15.300" stroke="#c4c4c4" stroke-width="1.300"/></svg>
<svg class="a" style="left:2512.5px;top:1374px;" width="16" height="16" viewBox="0 0 16 16"><path d="M2 6.500A6.200 6.200 0 0 1 12.500 3.500M14 9.500A6.200 6.200 0 0 1 3.500 12.500" fill="none" stroke="#c4c4c4" stroke-width="1.700"/><path d="M10.500 4.800 14.300 5.300 13.800 1.300ZM5.500 11.200 1.700 10.700 2.200 14.700Z" fill="#c4c4c4"/><path d="M8 4.300A2.600 2.600 0 0 1 9.300 9V10H6.700V9A2.600 2.600 0 0 1 8 4.300Z" fill="#c4c4c4"/><rect x="7" y="10.800" width="2" height="1.400" fill="#c4c4c4"/><path d="M0.300 1.600 13.500 16.400" stroke="#191919" stroke-width="1.400"/><path d="M1.300 0.500 14.500 15.300" stroke="#c4c4c4" stroke-width="1.300"/></svg>
<svg class="a" style="left:2538px;top:1374px;" width="16" height="16" viewBox="0 0 16 16"><circle cx="8" cy="8.200" r="6.500" fill="none" stroke="#c4c4c4" stroke-width="1.500"/><path d="M4.800 8.300 7.200 10.700 11.300 6" fill="none" stroke="#c4c4c4" stroke-width="1.800"/></svg>
</div>
</body></html>
